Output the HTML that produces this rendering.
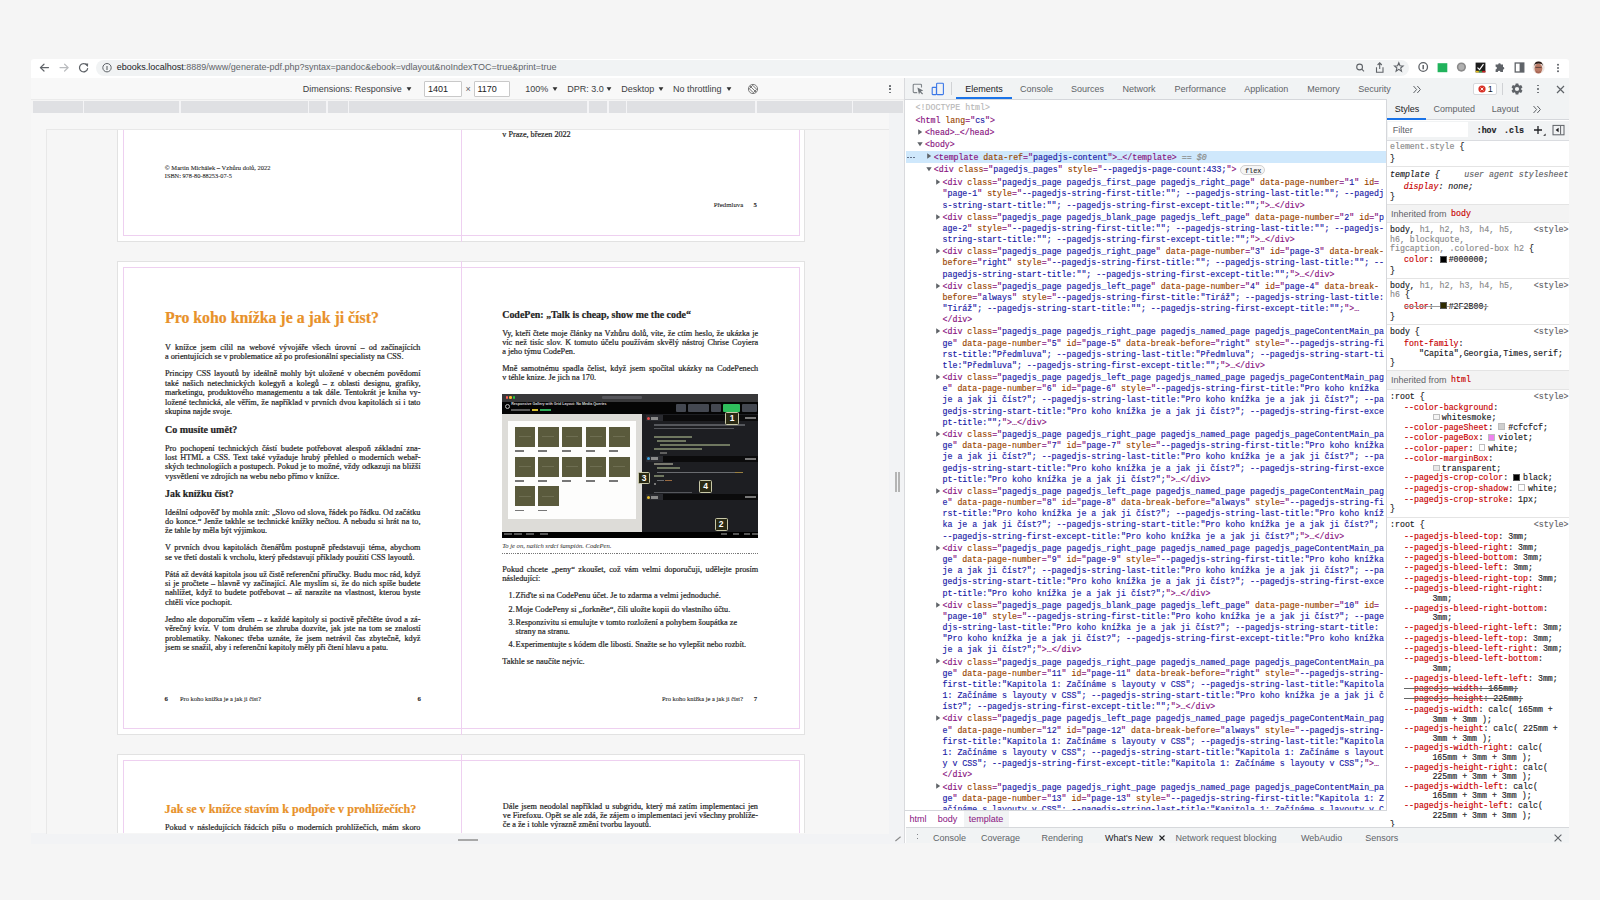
<!DOCTYPE html><html><head><meta charset="utf-8"><style>
*{box-sizing:border-box;margin:0;padding:0}
html,body{width:1600px;height:900px;overflow:hidden;background:#f5f5f5;position:relative}
body{font-family:"Liberation Sans",sans-serif;color:#202124}
.a{position:absolute}
.nw{white-space:pre}
.mk{-webkit-text-stroke:0.15px}.sk{-webkit-text-stroke:0.2px}
.t{color:#881280}.n{color:#994500}.v{color:#1a1aa6}
</style></head><body><div class="a" style="left:31.00px;top:58.80px;width:1538.00px;height:19.40px;background:#fff;border-radius:3px 3px 0 0"></div>
<div class="a" style="left:96.00px;top:60.00px;width:1313.00px;height:15.50px;background:#f1f3f4;border-radius:8px"></div>
<div class="a nw" style="left:116.80px;top:60.48px;font-family:'Liberation Sans',sans-serif;font-size:9px;line-height:14px;color:#5f6368;"><span style="color:#202124">ebooks.localhost</span>:8889/www/generate-pdf.php?syntax=pandoc&amp;ebook=vdlayout&amp;noIndexTOC=true&amp;print=true</div>
<svg class="a" style="left:36px;top:60px" width="60" height="16" viewBox="0 0 60 16">
<g fill="none" stroke="#5f6368" stroke-width="1.2" stroke-linecap="round" stroke-linejoin="round">
<path d="M12.5 7.6H4.5M8 4.2L4.4 7.6L8 11"/>
</g>
<g fill="none" stroke="#b9bbbe" stroke-width="1.2" stroke-linecap="round" stroke-linejoin="round">
<path d="M24 7.6H32M28.6 4.2L32.2 7.6L28.6 11"/>
</g>
<g fill="none" stroke="#5f6368" stroke-width="1.25" stroke-linecap="round">
<path d="M50.8 5.2A4.1 4.1 0 1 0 51.6 8.6"/>
</g>
<path d="M48.6 3.6L52.2 3.4L51.9 7Z" fill="#5f6368"/>
</svg>
<svg class="a" style="left:101px;top:62px" width="12" height="12" viewBox="0 0 12 12">
<circle cx="6" cy="5.7" r="4.2" fill="none" stroke="#5f6368" stroke-width="1"/>
<path d="M6 4V8" stroke="#5f6368" stroke-width="1.1"/>
</svg>
<svg class="a" style="left:1350px;top:59px" width="220" height="18" viewBox="0 0 220 18">
<g fill="none" stroke="#5f6368" stroke-width="1.1">
<circle cx="9.6" cy="8" r="2.9"/><path d="M11.8 10.2L14 12.4"/>
<path d="M26.5 8.2V13.2H33V8.2M29.7 4V10M27.6 6L29.7 3.9L31.8 6"/>
<path d="M48.8 3.8L50 6.8L53.1 7L50.7 9L51.5 12.2L48.8 10.4L46.1 12.2L46.9 9L44.5 7L47.6 6.8Z"/>
<circle cx="73.2" cy="8" r="4.3" stroke-width="1.3"/><path d="M73.2 6V10.2" stroke-width="1.5"/>
</g>
<rect x="87.6" y="4.2" width="9.7" height="9" fill="#21b35c"/>
<circle cx="111.4" cy="8.1" r="4.6" fill="#8a8a8a"/><circle cx="111.4" cy="8.1" r="3" fill="#b0b0b0"/>
<rect x="125.6" y="3.6" width="9.8" height="9.8" fill="#1c1c1c"/><path d="M127.5 8.6L129.6 10.6L133.5 5.2" stroke="#fff" stroke-width="1.2" fill="none"/>
<rect x="125.6" y="11.8" width="3.3" height="1.6" fill="#e8c020"/><rect x="128.9" y="11.8" width="3.3" height="1.6" fill="#3a9a40"/><rect x="132.2" y="11.8" width="3.2" height="1.6" fill="#d02020"/>
<path d="M145.6 5.5H148.2A1.3 1.3 0 0 1 150.8 5.5H153V8A1.3 1.3 0 0 1 153 10.6V13H150.4A1.3 1.3 0 0 0 147.8 13H145.6V10.4A1.3 1.3 0 0 0 145.6 7.8Z" fill="#5f6368"/>
<rect x="165.2" y="4" width="8.6" height="9" fill="none" stroke="#5f6368" stroke-width="1.3"/><rect x="169.6" y="4" width="4.2" height="9" fill="#5f6368"/>
<circle cx="188.6" cy="8.6" r="6.1" fill="#efe6e2"/><ellipse cx="188.4" cy="9.6" rx="3.9" ry="5" fill="#b97a66"/><path d="M184.2 7Q184.6 2.4 188.6 2.6Q192.6 2.6 192.8 7L191.6 5Q188.6 3.8 185.6 5Z" fill="#2a1a14"/><path d="M185.4 8.4H191.6" stroke="#3a2a24" stroke-width="0.7"/><path d="M186 12.6Q188.4 14.2 190.8 12.6" stroke="#8a4a3a" stroke-width="0.6" fill="none"/>
<circle cx="208" cy="5.8" r="1" fill="#5f6368"/><circle cx="208" cy="9" r="1" fill="#5f6368"/><circle cx="208" cy="12.2" r="1" fill="#5f6368"/>
</svg>
<div class="a" style="left:31.00px;top:78.00px;width:874.00px;height:21.50px;background:#f8f8f8;border-bottom:1px solid #ebebeb"></div>
<div class="a nw" style="left:302.70px;top:82.18px;font-family:'Liberation Sans',sans-serif;font-size:9px;line-height:14px;color:#3c4043;">Dimensions: Responsive</div>
<svg class="a" style="left:405.8px;top:85.8px" width="6" height="6" viewBox="0 0 6 6"><path d="M0.6 1.2H5.4L3 5Z" fill="#303030"/></svg>
<div class="a" style="left:424.20px;top:81.30px;width:37.50px;height:15.40px;background:#fff;border:1px solid #c9c9c9;border-radius:1px"></div>
<div class="a nw" style="left:428.00px;top:82.18px;font-family:'Liberation Sans',sans-serif;font-size:9px;line-height:14px;color:#202124;">1401</div>
<div class="a nw" style="left:465.60px;top:82.18px;font-family:'Liberation Sans',sans-serif;font-size:9px;line-height:14px;color:#5f6368;">×</div>
<div class="a" style="left:473.70px;top:81.30px;width:36.70px;height:15.40px;background:#fff;border:1px solid #c9c9c9;border-radius:1px"></div>
<div class="a nw" style="left:477.40px;top:82.18px;font-family:'Liberation Sans',sans-serif;font-size:9px;line-height:14px;color:#202124;">1170</div>
<div class="a nw" style="left:525.20px;top:82.18px;font-family:'Liberation Sans',sans-serif;font-size:9px;line-height:14px;color:#3c4043;">100%</div>
<svg class="a" style="left:552.3px;top:85.8px" width="6" height="6" viewBox="0 0 6 6"><path d="M0.6 1.2H5.4L3 5Z" fill="#303030"/></svg>
<div class="a nw" style="left:567.20px;top:82.18px;font-family:'Liberation Sans',sans-serif;font-size:9px;line-height:14px;color:#3c4043;">DPR: 3.0</div>
<svg class="a" style="left:606.4px;top:85.8px" width="6" height="6" viewBox="0 0 6 6"><path d="M0.6 1.2H5.4L3 5Z" fill="#303030"/></svg>
<div class="a nw" style="left:621.20px;top:82.18px;font-family:'Liberation Sans',sans-serif;font-size:9px;line-height:14px;color:#3c4043;">Desktop</div>
<svg class="a" style="left:658.3px;top:85.8px" width="6" height="6" viewBox="0 0 6 6"><path d="M0.6 1.2H5.4L3 5Z" fill="#303030"/></svg>
<div class="a nw" style="left:673.00px;top:82.18px;font-family:'Liberation Sans',sans-serif;font-size:9px;line-height:14px;color:#3c4043;">No throttling</div>
<svg class="a" style="left:725.8px;top:85.8px" width="6" height="6" viewBox="0 0 6 6"><path d="M0.6 1.2H5.4L3 5Z" fill="#303030"/></svg>
<svg class="a" style="left:747px;top:83px" width="12" height="12" viewBox="0 0 12 12"><g fill="none" stroke="#6e6e6e" stroke-width="0.9"><circle cx="6" cy="6" r="4.6"/><path d="M2.8 2.8L9.2 9.2"/><rect x="3.6" y="3.2" width="4.8" height="5.6" transform="rotate(-45 6 6)"/></g></svg>
<div class="a" style="left:889.30px;top:84.95px;width:1.70px;height:1.70px;background:#5f6368;border-radius:50%"></div>
<div class="a" style="left:889.30px;top:88.25px;width:1.70px;height:1.70px;background:#5f6368;border-radius:50%"></div>
<div class="a" style="left:889.30px;top:91.55px;width:1.70px;height:1.70px;background:#5f6368;border-radius:50%"></div>
<div class="a" style="left:33.00px;top:100.70px;width:870.00px;height:12.20px;background:#dfe0e3;"></div>
<div class="a" style="left:82.95px;top:100.70px;width:1.30px;height:12.20px;background:#f4f4f6;"></div>
<div class="a" style="left:179.25px;top:100.70px;width:1.30px;height:12.20px;background:#f4f4f6;"></div>
<div class="a" style="left:307.95px;top:100.70px;width:1.30px;height:12.20px;background:#f4f4f6;"></div>
<div class="a" style="left:326.35px;top:100.70px;width:1.30px;height:12.20px;background:#f4f4f6;"></div>
<div class="a" style="left:347.55px;top:100.70px;width:1.30px;height:12.20px;background:#f4f4f6;"></div>
<div class="a" style="left:587.35px;top:100.70px;width:1.30px;height:12.20px;background:#f4f4f6;"></div>
<div class="a" style="left:607.35px;top:100.70px;width:1.30px;height:12.20px;background:#f4f4f6;"></div>
<div class="a" style="left:626.05px;top:100.70px;width:1.30px;height:12.20px;background:#f4f4f6;"></div>
<div class="a" style="left:755.35px;top:100.70px;width:1.30px;height:12.20px;background:#f4f4f6;"></div>
<div class="a" style="left:851.55px;top:100.70px;width:1.30px;height:12.20px;background:#f4f4f6;"></div>
<div class="a" style="left:31.00px;top:113.00px;width:874.00px;height:730.50px;background:#f7f7f7;border-radius:0 0 0 6px"></div>
<div class="a" style="left:888.50px;top:113.00px;width:16.00px;height:730.50px;background:#f2f3f5;"></div>
<div class="a" style="left:31.00px;top:833.00px;width:874.00px;height:10.50px;background:#f2f3f5;"></div>
<div class="a" style="left:895.00px;top:472.00px;width:2.00px;height:19.60px;background:#b4b4b4;"></div>
<div class="a" style="left:897.90px;top:472.00px;width:2.00px;height:19.60px;background:#b4b4b4;"></div>
<div class="a" style="left:458.20px;top:839.20px;width:19.80px;height:1.60px;background:#a8a8a8;"></div>
<svg class="a" style="left:894px;top:835px" width="8" height="8" viewBox="0 0 8 8"><path d="M1.4 6L6.6 1.8" stroke="#8a8a8a" stroke-width="1.1"/></svg>
<div class="a" style="left:45.6px;top:128.8px;width:843px;height:705px;border-left:1px solid #e8e8e8;border-top:1px solid #e8e8e8;background:#f6f6f6"></div>
<div class="a" style="left:47px;top:130px;width:842px;height:703px;overflow:hidden"><div class="a" style="left:-47px;top:-130px;width:1600px;height:900px">
<div class="a" style="left:117.10px;top:-100.00px;width:688.40px;height:341.80px;background:#fff;border:1px solid #e2e2e2"></div>
<div class="a" style="left:122.90px;top:-94.20px;width:677.20px;height:330.20px;background:transparent;border:1px solid #eed0f0"></div>
<div class="a" style="left:460.80px;top:-100.00px;width:1.00px;height:341.80px;background:#eed0f0;"></div>
<div class="a" style="left:117.10px;top:261.00px;width:688.40px;height:474.00px;background:#fff;border:1px solid #e2e2e2"></div>
<div class="a" style="left:122.90px;top:266.80px;width:677.20px;height:462.40px;background:transparent;border:1px solid #eed0f0"></div>
<div class="a" style="left:460.80px;top:261.00px;width:1.00px;height:474.00px;background:#eed0f0;"></div>
<div class="a" style="left:117.10px;top:754.00px;width:688.40px;height:474.00px;background:#fff;border:1px solid #e2e2e2"></div>
<div class="a" style="left:122.90px;top:759.80px;width:677.20px;height:462.40px;background:transparent;border:1px solid #eed0f0"></div>
<div class="a" style="left:460.80px;top:754.00px;width:1.00px;height:474.00px;background:#eed0f0;"></div>
<div class="a sk" style="left:164.80px;top:163.41px;width:200.00px;white-space:nowrap;font-family:'Liberation Serif',serif;font-size:6.5px;line-height:10px;color:#1e1e1e;-webkit-text-stroke:0.08px;">© Martin Michálek – Vzhůru dolů, 2022</div>
<div class="a sk" style="left:164.80px;top:170.87px;width:200.00px;white-space:nowrap;font-family:'Liberation Serif',serif;font-size:6.3px;line-height:10px;color:#1e1e1e;-webkit-text-stroke:0.08px;">ISBN: 978-80-88253-07-5</div>
<div class="a sk" style="left:502.30px;top:129.94px;width:200.00px;white-space:nowrap;font-family:'Liberation Serif',serif;font-size:8.17px;line-height:10px;color:#1e1e1e;">v Praze, březen 2022</div>
<div class="a sk" style="left:713.70px;top:200.40px;width:60.00px;white-space:nowrap;font-family:'Liberation Serif',serif;font-size:6.83px;line-height:10px;color:#1e1e1e;-webkit-text-stroke:0.08px;">Předmluva</div>
<div class="a sk" style="left:753.60px;top:200.41px;width:10.00px;white-space:nowrap;font-family:'Liberation Serif',serif;font-size:6.8px;line-height:10px;color:#1e1e1e;-webkit-text-stroke:0.08px;font-weight:bold">5</div>
<div class="a sk" style="left:165.00px;top:308.96px;width:260.00px;white-space:nowrap;font-family:'Liberation Serif',serif;font-size:15.84px;line-height:18px;color:#e8912a;font-weight:bold">Pro koho knížka je a jak ji číst?</div>
<div class="a sk" style="left:165.00px;top:342.82px;width:255.50px;white-space:nowrap;font-family:'Liberation Serif',serif;font-size:8.25px;line-height:10px;color:#1e1e1e;text-align:justify;text-align-last:justify;">V knížce jsem cílil na webové vývojáře všech úrovní – od začínajících</div>
<div class="a sk" style="left:165.00px;top:352.17px;width:255.50px;white-space:nowrap;font-family:'Liberation Serif',serif;font-size:8.25px;line-height:10px;color:#1e1e1e;">a orientujících se v problematice až po profesionální specialisty na CSS.</div>
<div class="a sk" style="left:165.00px;top:369.47px;width:255.50px;white-space:nowrap;font-family:'Liberation Serif',serif;font-size:8.25px;line-height:10px;color:#1e1e1e;text-align:justify;text-align-last:justify;">Principy CSS layoutů by ideálně mohly být uložené v obecném povědomí</div>
<div class="a sk" style="left:165.00px;top:378.82px;width:255.50px;white-space:nowrap;font-family:'Liberation Serif',serif;font-size:8.25px;line-height:10px;color:#1e1e1e;text-align:justify;text-align-last:justify;">také našich netechnických kolegyň a kolegů – z oblasti designu, grafiky,</div>
<div class="a sk" style="left:165.00px;top:388.17px;width:255.50px;white-space:nowrap;font-family:'Liberation Serif',serif;font-size:8.25px;line-height:10px;color:#1e1e1e;text-align:justify;text-align-last:justify;">marketingu, produktového managementu a tak dále. Tentokrát je kniha vy-</div>
<div class="a sk" style="left:165.00px;top:397.52px;width:255.50px;white-space:nowrap;font-family:'Liberation Serif',serif;font-size:8.25px;line-height:10px;color:#1e1e1e;text-align:justify;text-align-last:justify;">ložené technická, ale věřím, že například v prvních dvou kapitolách si i tato</div>
<div class="a sk" style="left:165.00px;top:406.87px;width:255.50px;white-space:nowrap;font-family:'Liberation Serif',serif;font-size:8.25px;line-height:10px;color:#1e1e1e;">skupina najde svoje.</div>
<div class="a sk" style="left:165.00px;top:423.63px;width:200.00px;white-space:nowrap;font-family:'Liberation Serif',serif;font-size:10.0px;line-height:12px;color:#1e1e1e;font-weight:bold">Co musíte umět?</div>
<div class="a sk" style="left:165.00px;top:443.52px;width:255.50px;white-space:nowrap;font-family:'Liberation Serif',serif;font-size:8.25px;line-height:10px;color:#1e1e1e;text-align:justify;text-align-last:justify;">Pro pochopení technických částí budete potřebovat alespoň základní zna-</div>
<div class="a sk" style="left:165.00px;top:452.87px;width:255.50px;white-space:nowrap;font-family:'Liberation Serif',serif;font-size:8.25px;line-height:10px;color:#1e1e1e;text-align:justify;text-align-last:justify;">lost HTML a CSS. Text také vyžaduje hrubý přehled o moderních webař-</div>
<div class="a sk" style="left:165.00px;top:462.22px;width:255.50px;white-space:nowrap;font-family:'Liberation Serif',serif;font-size:8.25px;line-height:10px;color:#1e1e1e;text-align:justify;text-align-last:justify;">ských technologiích a postupech. Pokud je to možné, vždy odkazuji na bližší</div>
<div class="a sk" style="left:165.00px;top:471.57px;width:255.50px;white-space:nowrap;font-family:'Liberation Serif',serif;font-size:8.25px;line-height:10px;color:#1e1e1e;">vysvětlení ve zdrojích na webu nebo přímo v knížce.</div>
<div class="a sk" style="left:165.00px;top:487.66px;width:200.00px;white-space:nowrap;font-family:'Liberation Serif',serif;font-size:9.9px;line-height:12px;color:#1e1e1e;font-weight:bold">Jak knížku číst?</div>
<div class="a sk" style="left:165.00px;top:507.52px;width:255.50px;white-space:nowrap;font-family:'Liberation Serif',serif;font-size:8.25px;line-height:10px;color:#1e1e1e;text-align:justify;text-align-last:justify;">Ideální odpověď by mohla znít: „Slovo od slova, řádek po řádku. Od začátku</div>
<div class="a sk" style="left:165.00px;top:516.87px;width:255.50px;white-space:nowrap;font-family:'Liberation Serif',serif;font-size:8.25px;line-height:10px;color:#1e1e1e;text-align:justify;text-align-last:justify;">do konce.“ Jenže takhle se technické knížky nečtou. A nebudu si hrát na to,</div>
<div class="a sk" style="left:165.00px;top:526.22px;width:255.50px;white-space:nowrap;font-family:'Liberation Serif',serif;font-size:8.25px;line-height:10px;color:#1e1e1e;">že tahle by měla být výjimkou.</div>
<div class="a sk" style="left:165.00px;top:543.42px;width:255.50px;white-space:nowrap;font-family:'Liberation Serif',serif;font-size:8.25px;line-height:10px;color:#1e1e1e;text-align:justify;text-align-last:justify;">V prvních dvou kapitolách čtenářům postupně představuji téma, abychom</div>
<div class="a sk" style="left:165.00px;top:552.77px;width:255.50px;white-space:nowrap;font-family:'Liberation Serif',serif;font-size:8.25px;line-height:10px;color:#1e1e1e;">se ve třetí dostali k vrcholu, který představují příklady použití CSS layoutů.</div>
<div class="a sk" style="left:165.00px;top:569.72px;width:255.50px;white-space:nowrap;font-family:'Liberation Serif',serif;font-size:8.25px;line-height:10px;color:#1e1e1e;text-align:justify;text-align-last:justify;">Pátá až devátá kapitola jsou už čistě referenční příručky. Budu moc rád, když</div>
<div class="a sk" style="left:165.00px;top:579.07px;width:255.50px;white-space:nowrap;font-family:'Liberation Serif',serif;font-size:8.25px;line-height:10px;color:#1e1e1e;text-align:justify;text-align-last:justify;">si je pročtete – hlavně vy začínající. Ale myslím si, že do nich spíše budete</div>
<div class="a sk" style="left:165.00px;top:588.42px;width:255.50px;white-space:nowrap;font-family:'Liberation Serif',serif;font-size:8.25px;line-height:10px;color:#1e1e1e;text-align:justify;text-align-last:justify;">nahlížet, když to budete potřebovat – až narazíte na vlastnost, kterou byste</div>
<div class="a sk" style="left:165.00px;top:597.77px;width:255.50px;white-space:nowrap;font-family:'Liberation Serif',serif;font-size:8.25px;line-height:10px;color:#1e1e1e;">chtěli více pochopit.</div>
<div class="a sk" style="left:165.00px;top:615.12px;width:255.50px;white-space:nowrap;font-family:'Liberation Serif',serif;font-size:8.25px;line-height:10px;color:#1e1e1e;text-align:justify;text-align-last:justify;">Jedno ale doporučím všem – z každé kapitoly si poctivě přečtěte úvod a zá-</div>
<div class="a sk" style="left:165.00px;top:624.47px;width:255.50px;white-space:nowrap;font-family:'Liberation Serif',serif;font-size:8.25px;line-height:10px;color:#1e1e1e;text-align:justify;text-align-last:justify;">věrečný kvíz. V tom druhém se zhruba dozvíte, jak jste na tom se znalostí</div>
<div class="a sk" style="left:165.00px;top:633.82px;width:255.50px;white-space:nowrap;font-family:'Liberation Serif',serif;font-size:8.25px;line-height:10px;color:#1e1e1e;text-align:justify;text-align-last:justify;">problematiky. Nakonec třeba uznáte, že jsem netrávil čas zbytečně, když</div>
<div class="a sk" style="left:165.00px;top:643.17px;width:255.50px;white-space:nowrap;font-family:'Liberation Serif',serif;font-size:8.25px;line-height:10px;color:#1e1e1e;">jsem se snažil, aby i referenční kapitoly měly při čtení hlavu a patu.</div>
<div class="a sk" style="left:164.60px;top:693.71px;width:10.00px;white-space:nowrap;font-family:'Liberation Serif',serif;font-size:6.8px;line-height:10px;color:#1e1e1e;-webkit-text-stroke:0.08px;font-weight:bold">6</div>
<div class="a sk" style="left:180.00px;top:693.83px;width:120.00px;white-space:nowrap;font-family:'Liberation Serif',serif;font-size:6.44px;line-height:10px;color:#1e1e1e;-webkit-text-stroke:0.08px;">Pro koho knížka je a jak ji číst?</div>
<div class="a sk" style="left:417.40px;top:693.71px;width:10.00px;white-space:nowrap;font-family:'Liberation Serif',serif;font-size:6.8px;line-height:10px;color:#1e1e1e;-webkit-text-stroke:0.08px;font-weight:bold">6</div>
<div class="a sk" style="left:502.20px;top:308.64px;width:260.00px;white-space:nowrap;font-family:'Liberation Serif',serif;font-size:9.96px;line-height:12px;color:#1e1e1e;font-weight:bold">CodePen: „Talk is cheap, show me the code“</div>
<div class="a sk" style="left:502.20px;top:328.52px;width:256.00px;white-space:nowrap;font-family:'Liberation Serif',serif;font-size:8.25px;line-height:10px;color:#1e1e1e;text-align:justify;text-align-last:justify;">Vy, kteří čtete moje články na Vzhůru dolů, víte, že ctím heslo, že ukázka je</div>
<div class="a sk" style="left:502.20px;top:337.87px;width:256.00px;white-space:nowrap;font-family:'Liberation Serif',serif;font-size:8.25px;line-height:10px;color:#1e1e1e;text-align:justify;text-align-last:justify;">víc než tisíc slov. K tomuto účelu používám skvělý nástroj Chrise Coyiera</div>
<div class="a sk" style="left:502.20px;top:347.22px;width:256.00px;white-space:nowrap;font-family:'Liberation Serif',serif;font-size:8.25px;line-height:10px;color:#1e1e1e;">a jeho týmu CodePen.</div>
<div class="a sk" style="left:502.20px;top:363.62px;width:256.00px;white-space:nowrap;font-family:'Liberation Serif',serif;font-size:8.25px;line-height:10px;color:#1e1e1e;text-align:justify;text-align-last:justify;">Mně samotnému spadla čelist, když jsem spočítal ukázky na CodePenech</div>
<div class="a sk" style="left:502.20px;top:372.97px;width:256.00px;white-space:nowrap;font-family:'Liberation Serif',serif;font-size:8.25px;line-height:10px;color:#1e1e1e;">v téhle knize. Je jich na 170.</div>
<div class="a" style="left:502.20px;top:393.70px;width:256.10px;height:143.80px;background:#1d1e22;"></div>
<div class="a" style="left:502.20px;top:393.70px;width:256.10px;height:8.00px;background:#38383a;"></div>
<div class="a" style="left:505.70px;top:396.30px;width:2.60px;height:2.60px;background:#ff5f57;border-radius:50%"></div>
<div class="a" style="left:509.30px;top:396.30px;width:2.60px;height:2.60px;background:#febc2e;border-radius:50%"></div>
<div class="a" style="left:512.90px;top:396.30px;width:2.60px;height:2.60px;background:#28c840;border-radius:50%"></div>
<div class="a" style="left:602.20px;top:396.30px;width:40.00px;height:2.80px;background:#55555a;border-radius:1px"></div>
<div class="a" style="left:502.20px;top:401.70px;width:256.10px;height:12.50px;background:#050505;"></div>
<div class="a" style="left:504.80px;top:403.90px;width:5.40px;height:5.40px;background:transparent;border-radius:50%;border:1.2px solid #bbb"></div>
<div class="a nw" style="left:511.2px;top:402.3px;font-family:'Liberation Sans',sans-serif;font-weight:bold;font-size:3.65px;line-height:5px;color:#d6d6d6;letter-spacing:-0.02px">Responsive Gallery with Grid Layout: No Media Queries</div>
<div class="a" style="left:511.20px;top:409.30px;width:19.00px;height:1.50px;background:#5a5a5a;"></div>
<div class="a" style="left:532.20px;top:408.90px;width:6.00px;height:2.40px;background:#d8c030;"></div>
<div class="a" style="left:539.70px;top:408.90px;width:11.00px;height:2.40px;background:#2fae5a;"></div>
<div class="a" style="left:675.50px;top:404.20px;width:10.00px;height:8.30px;background:#444851;border-radius:1px"></div>
<div class="a" style="left:687.70px;top:404.20px;width:21.10px;height:8.30px;background:#444851;border-radius:1px"></div>
<div class="a" style="left:711.30px;top:404.20px;width:10.00px;height:8.30px;background:#444851;border-radius:1px"></div>
<div class="a" style="left:723.30px;top:404.20px;width:16.70px;height:8.30px;background:#2fbe5c;border-radius:1px"></div>
<div class="a" style="left:742.20px;top:404.20px;width:14.50px;height:8.30px;background:#444851;border-radius:1px"></div>
<div class="a" style="left:502.20px;top:414.20px;width:140.00px;height:117.80px;background:#dddcd8;"></div>
<div class="a" style="left:508.30px;top:420.80px;width:127.70px;height:98.40px;background:#fdfdfc;"></div>
<div class="a" style="left:514.70px;top:427.00px;width:20.40px;height:20.20px;background:#5a5a3c;"></div>
<div class="a" style="left:518.70px;top:436.40px;width:12.00px;height:1.10px;background:#6e6e52;"></div>
<div class="a" style="left:514.70px;top:450.30px;width:9.00px;height:1.50px;background:#777;"></div>
<div class="a" style="left:538.35px;top:427.00px;width:20.40px;height:20.20px;background:#5a5a3c;"></div>
<div class="a" style="left:542.35px;top:436.40px;width:12.00px;height:1.10px;background:#6e6e52;"></div>
<div class="a" style="left:538.35px;top:450.30px;width:9.00px;height:1.50px;background:#777;"></div>
<div class="a" style="left:562.00px;top:427.00px;width:20.40px;height:20.20px;background:#5a5a3c;"></div>
<div class="a" style="left:566.00px;top:436.40px;width:12.00px;height:1.10px;background:#6e6e52;"></div>
<div class="a" style="left:562.00px;top:450.30px;width:9.00px;height:1.50px;background:#777;"></div>
<div class="a" style="left:585.65px;top:427.00px;width:20.40px;height:20.20px;background:#5a5a3c;"></div>
<div class="a" style="left:589.65px;top:436.40px;width:12.00px;height:1.10px;background:#6e6e52;"></div>
<div class="a" style="left:585.65px;top:450.30px;width:9.00px;height:1.50px;background:#777;"></div>
<div class="a" style="left:609.30px;top:427.00px;width:20.40px;height:20.20px;background:#5a5a3c;"></div>
<div class="a" style="left:613.30px;top:436.40px;width:12.00px;height:1.10px;background:#6e6e52;"></div>
<div class="a" style="left:609.30px;top:450.30px;width:9.00px;height:1.50px;background:#777;"></div>
<div class="a" style="left:514.70px;top:456.70px;width:20.40px;height:20.20px;background:#5a5a3c;"></div>
<div class="a" style="left:518.70px;top:466.10px;width:12.00px;height:1.10px;background:#6e6e52;"></div>
<div class="a" style="left:514.70px;top:480.00px;width:9.00px;height:1.50px;background:#777;"></div>
<div class="a" style="left:538.35px;top:456.70px;width:20.40px;height:20.20px;background:#5a5a3c;"></div>
<div class="a" style="left:542.35px;top:466.10px;width:12.00px;height:1.10px;background:#6e6e52;"></div>
<div class="a" style="left:538.35px;top:480.00px;width:9.00px;height:1.50px;background:#777;"></div>
<div class="a" style="left:562.00px;top:456.70px;width:20.40px;height:20.20px;background:#5a5a3c;"></div>
<div class="a" style="left:566.00px;top:466.10px;width:12.00px;height:1.10px;background:#6e6e52;"></div>
<div class="a" style="left:562.00px;top:480.00px;width:9.00px;height:1.50px;background:#777;"></div>
<div class="a" style="left:585.65px;top:456.70px;width:20.40px;height:20.20px;background:#5a5a3c;"></div>
<div class="a" style="left:589.65px;top:466.10px;width:12.00px;height:1.10px;background:#6e6e52;"></div>
<div class="a" style="left:585.65px;top:480.00px;width:9.00px;height:1.50px;background:#777;"></div>
<div class="a" style="left:609.30px;top:456.70px;width:20.40px;height:20.20px;background:#5a5a3c;"></div>
<div class="a" style="left:613.30px;top:466.10px;width:12.00px;height:1.10px;background:#6e6e52;"></div>
<div class="a" style="left:609.30px;top:480.00px;width:9.00px;height:1.50px;background:#777;"></div>
<div class="a" style="left:514.70px;top:486.30px;width:20.40px;height:20.20px;background:#5a5a3c;"></div>
<div class="a" style="left:518.70px;top:495.70px;width:12.00px;height:1.10px;background:#6e6e52;"></div>
<div class="a" style="left:514.70px;top:509.60px;width:9.00px;height:1.50px;background:#777;"></div>
<div class="a" style="left:538.35px;top:486.30px;width:20.40px;height:20.20px;background:#5a5a3c;"></div>
<div class="a" style="left:542.35px;top:495.70px;width:12.00px;height:1.10px;background:#6e6e52;"></div>
<div class="a" style="left:538.35px;top:509.60px;width:9.00px;height:1.50px;background:#777;"></div>
<div class="a" style="left:646.00px;top:415.00px;width:17.00px;height:6.40px;background:#2a2b30;"></div>
<div class="a" style="left:663.00px;top:415.00px;width:95.30px;height:6.40px;background:#0b0b0c;"></div>
<div class="a" style="left:745.00px;top:417.00px;width:11.00px;height:2.00px;background:#777;"></div>
<div class="a" style="left:646.00px;top:455.60px;width:17.00px;height:6.40px;background:#2a2b30;"></div>
<div class="a" style="left:663.00px;top:455.60px;width:95.30px;height:6.40px;background:#0b0b0c;"></div>
<div class="a" style="left:745.00px;top:457.60px;width:11.00px;height:2.00px;background:#777;"></div>
<div class="a" style="left:646.00px;top:493.60px;width:17.00px;height:6.40px;background:#2a2b30;"></div>
<div class="a" style="left:663.00px;top:493.60px;width:95.30px;height:6.40px;background:#0b0b0c;"></div>
<div class="a" style="left:745.00px;top:495.60px;width:11.00px;height:2.00px;background:#777;"></div>
<div class="a" style="left:646.50px;top:416.60px;width:3.60px;height:3.60px;background:#e34c4c;border-radius:50%"></div>
<div class="a" style="left:651.00px;top:417.20px;width:7.00px;height:2.40px;background:#8a8a8a;"></div>
<div class="a" style="left:646.50px;top:456.60px;width:3.60px;height:3.60px;background:#3aa0e0;border-radius:50%"></div>
<div class="a" style="left:651.00px;top:457.20px;width:7.00px;height:2.40px;background:#8a8a8a;"></div>
<div class="a" style="left:646.50px;top:495.80px;width:3.60px;height:3.60px;background:#e8c030;border-radius:50%"></div>
<div class="a" style="left:651.00px;top:496.40px;width:7.00px;height:2.40px;background:#8a8a8a;"></div>
<div class="a" style="left:654.00px;top:424.30px;width:91.00px;height:1.40px;background:#55575c;"></div>
<div class="a" style="left:654.00px;top:428.10px;width:80.00px;height:1.40px;background:#55575c;"></div>
<div class="a" style="left:654.00px;top:436.30px;width:38.00px;height:1.40px;background:#6f7760;"></div>
<div class="a" style="left:657.00px;top:440.30px;width:29.00px;height:1.40px;background:#6f7760;"></div>
<div class="a" style="left:660.00px;top:444.30px;width:70.00px;height:1.40px;background:#6f7760;"></div>
<div class="a" style="left:654.00px;top:448.30px;width:48.00px;height:1.40px;background:#6f7760;"></div>
<div class="a" style="left:660.00px;top:452.30px;width:7.00px;height:1.40px;background:#606060;"></div>
<div class="a" style="left:654.00px;top:463.30px;width:19.00px;height:1.40px;background:#7a7a70;"></div>
<div class="a" style="left:657.00px;top:467.30px;width:23.00px;height:1.40px;background:#6f7760;"></div>
<div class="a" style="left:657.00px;top:471.80px;width:78.00px;height:1.40px;background:#6a6c70;"></div>
<div class="a" style="left:735.00px;top:471.80px;width:8.00px;height:1.40px;background:#9a8040;"></div>
<div class="a" style="left:654.00px;top:475.30px;width:10.00px;height:1.40px;background:#6f7760;"></div>
<div class="a" style="left:657.00px;top:479.80px;width:7.00px;height:1.40px;background:#6a6c70;"></div>
<div class="a" style="left:665.00px;top:479.80px;width:7.00px;height:1.40px;background:#9a6a40;"></div>
<div class="a" style="left:654.00px;top:483.30px;width:1.60px;height:1.40px;background:#777;"></div>
<div class="a" style="left:654.00px;top:491.80px;width:38.00px;height:1.40px;background:#55575c;"></div>
<div class="a" style="left:502.20px;top:532.00px;width:256.10px;height:5.50px;background:#000;"></div>
<div class="a" style="left:504.00px;top:533.40px;width:8.00px;height:1.60px;background:#555;"></div>
<div class="a" style="left:514.00px;top:533.40px;width:8.00px;height:1.60px;background:#555;"></div>
<div class="a" style="left:526.00px;top:533.40px;width:8.00px;height:1.60px;background:#555;"></div>
<div class="a" style="left:540.00px;top:533.40px;width:8.00px;height:1.60px;background:#555;"></div>
<div class="a" style="left:721.00px;top:533.40px;width:6.00px;height:1.60px;background:#555;"></div>
<div class="a" style="left:733.00px;top:533.40px;width:6.00px;height:1.60px;background:#555;"></div>
<div class="a" style="left:744.00px;top:533.40px;width:6.00px;height:1.60px;background:#555;"></div>
<div class="a" style="left:752.00px;top:533.40px;width:6.00px;height:1.60px;background:#555;"></div>
<div class="a" style="left:725.0px;top:412.0px;width:14.2px;height:12.7px;background:#2a2a14;border:1px solid #c8c8a8;border-radius:1.5px;color:#fff;font-family:'Liberation Sans',sans-serif;font-weight:bold;font-size:8.5px;line-height:10.7px;text-align:center">1</div>
<div class="a" style="left:637.7px;top:471.7px;width:12.8px;height:12.8px;background:#2a2a14;border:1px solid #c8c8a8;border-radius:1.5px;color:#fff;font-family:'Liberation Sans',sans-serif;font-weight:bold;font-size:8.5px;line-height:10.8px;text-align:center">3</div>
<div class="a" style="left:698.8px;top:480.3px;width:13.4px;height:13.0px;background:#2a2a14;border:1px solid #c8c8a8;border-radius:1.5px;color:#fff;font-family:'Liberation Sans',sans-serif;font-weight:bold;font-size:8.5px;line-height:11.0px;text-align:center">4</div>
<div class="a" style="left:714.7px;top:517.5px;width:13.0px;height:13.0px;background:#2a2a14;border:1px solid #c8c8a8;border-radius:1.5px;color:#fff;font-family:'Liberation Sans',sans-serif;font-weight:bold;font-size:8.5px;line-height:11.0px;text-align:center">2</div>
<div class="a sk" style="left:502.20px;top:540.77px;width:200.00px;white-space:nowrap;font-family:'Liberation Serif',serif;font-size:6.6px;line-height:10px;color:#1e1e1e;-webkit-text-stroke:0.08px;font-style:italic;-webkit-text-stroke:0">To je on, našich srdcí šampión. CodePen.</div>
<div class="a" style="left:502.20px;top:553.00px;width:256.00px;height:0.90px;background:repeating-linear-gradient(90deg,#777 0 1.2px,transparent 1.2px 2.2px);"></div>
<div class="a sk" style="left:502.20px;top:565.02px;width:256.00px;white-space:nowrap;font-family:'Liberation Serif',serif;font-size:8.25px;line-height:10px;color:#1e1e1e;text-align:justify;text-align-last:justify;">Pokud chcete „peny“ zkoušet, což vám velmi doporučuji, udělejte prosím</div>
<div class="a sk" style="left:502.20px;top:574.37px;width:256.00px;white-space:nowrap;font-family:'Liberation Serif',serif;font-size:8.25px;line-height:10px;color:#1e1e1e;">následující:</div>
<div class="a sk" style="left:508.60px;top:591.02px;width:10.00px;white-space:nowrap;font-family:'Liberation Serif',serif;font-size:8.25px;line-height:10px;color:#1e1e1e;">1.</div>
<div class="a sk" style="left:515.60px;top:591.02px;width:240.00px;white-space:nowrap;font-family:'Liberation Serif',serif;font-size:8.25px;line-height:10px;color:#1e1e1e;">Zřiďte si na CodePenu účet. Je to zdarma a velmi jednoduché.</div>
<div class="a sk" style="left:508.60px;top:604.62px;width:10.00px;white-space:nowrap;font-family:'Liberation Serif',serif;font-size:8.25px;line-height:10px;color:#1e1e1e;">2.</div>
<div class="a sk" style="left:515.60px;top:604.62px;width:240.00px;white-space:nowrap;font-family:'Liberation Serif',serif;font-size:8.25px;line-height:10px;color:#1e1e1e;">Moje CodePeny si „forkněte“, čili uložte kopii do vlastního účtu.</div>
<div class="a sk" style="left:508.60px;top:617.62px;width:10.00px;white-space:nowrap;font-family:'Liberation Serif',serif;font-size:8.25px;line-height:10px;color:#1e1e1e;">3.</div>
<div class="a sk" style="left:515.60px;top:617.62px;width:240.00px;white-space:nowrap;font-family:'Liberation Serif',serif;font-size:8.25px;line-height:10px;color:#1e1e1e;">Responzivitu si emulujte v tomto rozložení a pohybem šoupátka ze</div>
<div class="a sk" style="left:508.60px;top:640.02px;width:10.00px;white-space:nowrap;font-family:'Liberation Serif',serif;font-size:8.25px;line-height:10px;color:#1e1e1e;">4.</div>
<div class="a sk" style="left:515.60px;top:640.02px;width:240.00px;white-space:nowrap;font-family:'Liberation Serif',serif;font-size:8.25px;line-height:10px;color:#1e1e1e;">Experimentujte s kódem dle libosti. Snažte se ho vylepšit nebo rozbít.</div>
<div class="a sk" style="left:515.60px;top:627.02px;width:240.00px;white-space:nowrap;font-family:'Liberation Serif',serif;font-size:8.25px;line-height:10px;color:#1e1e1e;">strany na stranu.</div>
<div class="a sk" style="left:502.20px;top:657.18px;width:200.00px;white-space:nowrap;font-family:'Liberation Serif',serif;font-size:8.35px;line-height:10px;color:#1e1e1e;">Takhle se naučíte nejvíc.</div>
<div class="a sk" style="left:662.00px;top:693.83px;width:90.00px;white-space:nowrap;font-family:'Liberation Serif',serif;font-size:6.44px;line-height:10px;color:#1e1e1e;-webkit-text-stroke:0.08px;">Pro koho knížka je a jak ji číst?</div>
<div class="a sk" style="left:753.80px;top:693.71px;width:10.00px;white-space:nowrap;font-family:'Liberation Serif',serif;font-size:6.8px;line-height:10px;color:#1e1e1e;-webkit-text-stroke:0.08px;font-weight:bold">7</div>
<div class="a sk" style="left:164.60px;top:801.81px;width:300.00px;white-space:nowrap;font-family:'Liberation Serif',serif;font-size:12.13px;line-height:14px;color:#e8912a;font-weight:bold">Jak se v knížce stavím k podpoře v prohlížečích?</div>
<div class="a sk" style="left:165.00px;top:823.22px;width:255.50px;white-space:nowrap;font-family:'Liberation Serif',serif;font-size:8.25px;line-height:10px;color:#1e1e1e;text-align:justify;text-align-last:justify;">Pokud v následujících řádcích píšu o moderních prohlížečích, mám skoro</div>
<div class="a sk" style="left:502.80px;top:802.02px;width:255.20px;white-space:nowrap;font-family:'Liberation Serif',serif;font-size:8.25px;line-height:10px;color:#1e1e1e;text-align:justify;text-align-last:justify;">Dále jsem neodolal například u subgridu, který má zatím implementaci jen</div>
<div class="a sk" style="left:502.80px;top:811.22px;width:255.20px;white-space:nowrap;font-family:'Liberation Serif',serif;font-size:8.25px;line-height:10px;color:#1e1e1e;text-align:justify;text-align-last:justify;">ve Firefoxu. Opět se ale zdá, že zájem o implementaci jeví všechny prohlíže-</div>
<div class="a sk" style="left:502.80px;top:820.32px;width:255.20px;white-space:nowrap;font-family:'Liberation Serif',serif;font-size:8.25px;line-height:10px;color:#1e1e1e;">če a že i tohle výrazně změní tvorbu layoutů.</div>
</div></div>
<div class="a" style="left:903.90px;top:78.00px;width:665.10px;height:765.40px;background:#fff;border-left:1px solid #d9dadd"></div>
<div class="a" style="left:905.00px;top:78.00px;width:664.00px;height:21.60px;background:#f1f3f4;border-bottom:1px solid #d5d7db"></div>
<svg class="a" style="left:910px;top:81px" width="40" height="16" viewBox="0 0 40 16">
<path d="M7.2 11.6H4.2A1 1 0 0 1 3.2 10.6V4.2A1 1 0 0 1 4.2 3.2H10.5A1 1 0 0 1 11.5 4.2V6.6" fill="none" stroke="#80868b" stroke-width="1.1"/>
<path d="M7.4 6.6L13.2 9.4L10.8 10.4L13 12.6L12.2 13.4L10 11.2L9 13.6Z" fill="#6f757a"/>
<rect x="26.6" y="2.2" width="6.8" height="11.4" rx="0.8" fill="none" stroke="#3b78e7" stroke-width="1.1"/>
<rect x="22.2" y="6.4" width="4.2" height="7.2" rx="0.6" fill="none" stroke="#3b78e7" stroke-width="1.1"/>
</svg>
<div class="a" style="left:951.20px;top:82.00px;width:1.00px;height:13.00px;background:#d0d2d5;"></div>
<div class="a nw" style="left:965.20px;top:82.08px;font-family:'Liberation Sans',sans-serif;font-size:9px;line-height:14px;color:#202124;">Elements</div>
<div class="a nw" style="left:1020.00px;top:82.08px;font-family:'Liberation Sans',sans-serif;font-size:9px;line-height:14px;color:#5f6368;">Console</div>
<div class="a nw" style="left:1071.00px;top:82.08px;font-family:'Liberation Sans',sans-serif;font-size:9px;line-height:14px;color:#5f6368;">Sources</div>
<div class="a nw" style="left:1122.60px;top:82.08px;font-family:'Liberation Sans',sans-serif;font-size:9px;line-height:14px;color:#5f6368;">Network</div>
<div class="a nw" style="left:1174.50px;top:82.08px;font-family:'Liberation Sans',sans-serif;font-size:9px;line-height:14px;color:#5f6368;">Performance</div>
<div class="a nw" style="left:1244.20px;top:82.08px;font-family:'Liberation Sans',sans-serif;font-size:9px;line-height:14px;color:#5f6368;">Application</div>
<div class="a nw" style="left:1307.20px;top:82.08px;font-family:'Liberation Sans',sans-serif;font-size:9px;line-height:14px;color:#5f6368;">Memory</div>
<div class="a nw" style="left:1358.30px;top:82.08px;font-family:'Liberation Sans',sans-serif;font-size:9px;line-height:14px;color:#5f6368;">Security</div>
<div class="a" style="left:956.20px;top:97.30px;width:55.50px;height:2.00px;background:#1a73e8;"></div>
<svg class="a" style="left:1412px;top:84.5px" width="10" height="9" viewBox="0 0 10 9"><path d="M1.5 1L4.6 4.5L1.5 8M5.3 1L8.4 4.5L5.3 8" fill="none" stroke="#5f6368" stroke-width="1"/></svg>
<div class="a" style="left:1473.40px;top:82.70px;width:24.00px;height:12.80px;background:#fff;border:1px solid #d7d9dc;border-radius:2px"></div>
<svg class="a" style="left:1478px;top:85px" width="8" height="8" viewBox="0 0 8 8"><circle cx="4" cy="4" r="3.6" fill="#d93025"/><path d="M2.6 2.6L5.4 5.4M5.4 2.6L2.6 5.4" stroke="#fff" stroke-width="0.9"/></svg>
<div class="a nw" style="left:1487.80px;top:82.08px;font-family:'Liberation Sans',sans-serif;font-size:9px;line-height:14px;color:#202124;">1</div>
<div class="a" style="left:1502.40px;top:83.00px;width:1.00px;height:12.00px;background:#d0d2d5;"></div>
<svg class="a" style="left:1510px;top:82px" width="14" height="14" viewBox="0 0 24 24"><path fill="#5f6368" d="M19.14 12.94c.04-.3.06-.61.06-.94 0-.32-.02-.64-.07-.94l2.03-1.58a.49.49 0 0 0 .12-.61l-1.92-3.32a.49.49 0 0 0-.59-.22l-2.39.96c-.5-.38-1.03-.7-1.62-.94l-.36-2.54a.48.48 0 0 0-.48-.41h-3.84c-.24 0-.43.17-.47.41l-.36 2.54c-.59.24-1.13.57-1.62.94l-2.39-.96a.49.49 0 0 0-.59.22L2.74 8.87c-.12.21-.08.47.12.61l2.03 1.58c-.05.3-.09.63-.09.94s.02.64.07.94l-2.03 1.58a.49.49 0 0 0-.12.61l1.92 3.32c.12.22.37.29.59.22l2.39-.96c.5.38 1.03.7 1.62.94l.36 2.54c.05.24.24.41.48.41h3.84c.24 0 .44-.17.47-.41l.36-2.54c.59-.24 1.13-.56 1.62-.94l2.39.96c.22.08.47 0 .59-.22l1.92-3.32c.12-.22.07-.47-.12-.61l-2.01-1.58zM12 15.6A3.6 3.6 0 1 1 12 8.4a3.6 3.6 0 0 1 0 7.2z"/></svg>
<div class="a" style="left:1536.90px;top:84.50px;width:1.80px;height:1.80px;background:#5f6368;border-radius:50%"></div>
<div class="a" style="left:1536.90px;top:88.00px;width:1.80px;height:1.80px;background:#5f6368;border-radius:50%"></div>
<div class="a" style="left:1536.90px;top:91.50px;width:1.80px;height:1.80px;background:#5f6368;border-radius:50%"></div>
<svg class="a" style="left:1555px;top:83.5px" width="11" height="11" viewBox="0 0 11 11"><path d="M2 2L9 9M9 2L2 9" stroke="#5f6368" stroke-width="1.2"/></svg>
<div class="a" style="left:905.50px;top:151.20px;width:481.00px;height:11.80px;background:#cfe8fc;"></div>
<div class="a nw mk" style="left:915.60px;top:102.00px;font-family:'Liberation Mono',monospace;font-size:8.28px;line-height:12px;color:#202124;"><span style="color:#b8b8b8">&lt;!DOCTYPE html&gt;</span></div>
<div class="a nw mk" style="left:915.60px;top:114.50px;font-family:'Liberation Mono',monospace;font-size:8.28px;line-height:12px;color:#202124;"><span class="t">&lt;html</span><span class="n"> lang</span><span class="t">="</span><span class="v">cs</span><span class="t">"&gt;</span></div>
<svg class="a" style="left:917.4px;top:128.5px" width="6" height="6" viewBox="0 0 6 6"><path d="M1.2 0.3V5.7L5.2 3Z" fill="#5f6368"/></svg>
<div class="a nw mk" style="left:925.00px;top:126.70px;font-family:'Liberation Mono',monospace;font-size:8.28px;line-height:12px;color:#202124;"><span class="t">&lt;head&gt;…&lt;/head&gt;</span></div>
<svg class="a" style="left:917.4px;top:140.8px" width="6" height="6" viewBox="0 0 6 6"><path d="M0.3 1.2H5.7L3 5.2Z" fill="#5f6368"/></svg>
<div class="a nw mk" style="left:925.00px;top:139.00px;font-family:'Liberation Mono',monospace;font-size:8.28px;line-height:12px;color:#202124;"><span class="t">&lt;body&gt;</span></div>
<div class="a" style="left:907.40px;top:156.60px;width:1.60px;height:1.60px;background:#56617a;border-radius:50%"></div>
<div class="a" style="left:910.40px;top:156.60px;width:1.60px;height:1.60px;background:#56617a;border-radius:50%"></div>
<div class="a" style="left:913.40px;top:156.60px;width:1.60px;height:1.60px;background:#56617a;border-radius:50%"></div>
<svg class="a" style="left:926.2px;top:153.4px" width="6" height="6" viewBox="0 0 6 6"><path d="M1.2 0.3V5.7L5.2 3Z" fill="#5f6368"/></svg>
<div class="a nw mk" style="left:933.75px;top:151.50px;font-family:'Liberation Mono',monospace;font-size:8.28px;line-height:12px;color:#202124;"><span class="t">&lt;template</span><span class="n"> data-ref</span><span class="t">="</span><span class="v">pagedjs-content</span><span class="t">"&gt;…&lt;/template&gt;</span><span style="color:#888"> == </span><span style="color:#888;font-style:italic">$0</span></div>
<svg class="a" style="left:926.2px;top:165.8px" width="6" height="6" viewBox="0 0 6 6"><path d="M0.3 1.2H5.7L3 5.2Z" fill="#5f6368"/></svg>
<div class="a nw mk" style="left:933.75px;top:163.90px;font-family:'Liberation Mono',monospace;font-size:8.28px;line-height:12px;color:#202124;"><span class="t">&lt;div</span><span class="n"> class</span><span class="t">="</span><span class="v">pagedjs_pages</span><span class="t">"</span><span class="n"> style</span><span class="t">="</span><span class="v">--pagedjs-page-count:433;</span><span class="t">"&gt;</span></div>
<div class="a" style="left:1239.70px;top:165.30px;width:25.30px;height:10.10px;background:#f5f5f5;border:1px solid #d0d0d0;border-radius:5px"></div>
<div class="a nw mk" style="left:1245.00px;top:166.19px;font-family:'Liberation Mono',monospace;font-size:6.8px;line-height:10px;color:#303030;">flex</div>
<div class="a" style="left:905px;top:99px;width:481px;height:710.5px;overflow:hidden"><div class="a" style="left:-905px;top:-99px;width:1600px;height:900px">
<div class="a nw mk" style="left:942.50px;top:177.25px;font-family:'Liberation Mono',monospace;font-size:8.28px;line-height:12px;color:#202124;"><span class="t">&lt;div </span><span class="n">class</span><span class="t">="</span><span class="v">pagedjs_page pagedjs_first_page pagedjs_right_page</span><span class="t">" </span><span class="n">data-page-number</span><span class="t">="</span><span class="v">1</span><span class="t">" </span><span class="n">id</span><span class="t">=</span></div>
<svg class="a" style="left:935.0px;top:179.2px" width="6" height="6" viewBox="0 0 6 6"><path d="M1.2 0.3V5.7L5.2 3Z" fill="#5f6368"/></svg>
<div class="a nw mk" style="left:942.50px;top:188.45px;font-family:'Liberation Mono',monospace;font-size:8.28px;line-height:12px;color:#202124;"><span class="t">"</span><span class="v">page-1</span><span class="t">" </span><span class="n">style</span><span class="t">="</span><span class="v">--pagedjs-string-first-title:""; --pagedjs-string-last-title:""; --pagedj</span></div>
<div class="a nw mk" style="left:942.50px;top:199.65px;font-family:'Liberation Mono',monospace;font-size:8.28px;line-height:12px;color:#202124;"><span class="v">s-string-start-title:""; --pagedjs-string-first-except-title:"";</span><span class="t">"&gt;…&lt;/div&gt;</span></div>
<div class="a nw mk" style="left:942.50px;top:211.73px;font-family:'Liberation Mono',monospace;font-size:8.28px;line-height:12px;color:#202124;"><span class="t">&lt;div </span><span class="n">class</span><span class="t">="</span><span class="v">pagedjs_page pagedjs_blank_page pagedjs_left_page</span><span class="t">" </span><span class="n">data-page-number</span><span class="t">="</span><span class="v">2</span><span class="t">" </span><span class="n">id</span><span class="t">="</span><span class="v">p</span></div>
<svg class="a" style="left:935.0px;top:213.6px" width="6" height="6" viewBox="0 0 6 6"><path d="M1.2 0.3V5.7L5.2 3Z" fill="#5f6368"/></svg>
<div class="a nw mk" style="left:942.50px;top:222.93px;font-family:'Liberation Mono',monospace;font-size:8.28px;line-height:12px;color:#202124;"><span class="v">age-2</span><span class="t">" </span><span class="n">style</span><span class="t">="</span><span class="v">--pagedjs-string-first-title:""; --pagedjs-string-last-title:""; --pagedjs-</span></div>
<div class="a nw mk" style="left:942.50px;top:234.14px;font-family:'Liberation Mono',monospace;font-size:8.28px;line-height:12px;color:#202124;"><span class="v">string-start-title:""; --pagedjs-string-first-except-title:"";</span><span class="t">"&gt;…&lt;/div&gt;</span></div>
<div class="a nw mk" style="left:942.50px;top:246.21px;font-family:'Liberation Mono',monospace;font-size:8.28px;line-height:12px;color:#202124;"><span class="t">&lt;div </span><span class="n">class</span><span class="t">="</span><span class="v">pagedjs_page pagedjs_right_page</span><span class="t">" </span><span class="n">data-page-number</span><span class="t">="</span><span class="v">3</span><span class="t">" </span><span class="n">id</span><span class="t">="</span><span class="v">page-3</span><span class="t">" </span><span class="n">data-break-</span></div>
<svg class="a" style="left:935.0px;top:248.1px" width="6" height="6" viewBox="0 0 6 6"><path d="M1.2 0.3V5.7L5.2 3Z" fill="#5f6368"/></svg>
<div class="a nw mk" style="left:942.50px;top:257.42px;font-family:'Liberation Mono',monospace;font-size:8.28px;line-height:12px;color:#202124;"><span class="n">before</span><span class="t">="</span><span class="v">right</span><span class="t">" </span><span class="n">style</span><span class="t">="</span><span class="v">--pagedjs-string-first-title:""; --pagedjs-string-last-title:""; --</span></div>
<div class="a nw mk" style="left:942.50px;top:268.62px;font-family:'Liberation Mono',monospace;font-size:8.28px;line-height:12px;color:#202124;"><span class="v">pagedjs-string-start-title:""; --pagedjs-string-first-except-title:"";</span><span class="t">"&gt;…&lt;/div&gt;</span></div>
<div class="a nw mk" style="left:942.50px;top:280.70px;font-family:'Liberation Mono',monospace;font-size:8.28px;line-height:12px;color:#202124;"><span class="t">&lt;div </span><span class="n">class</span><span class="t">="</span><span class="v">pagedjs_page pagedjs_left_page</span><span class="t">" </span><span class="n">data-page-number</span><span class="t">="</span><span class="v">4</span><span class="t">" </span><span class="n">id</span><span class="t">="</span><span class="v">page-4</span><span class="t">" </span><span class="n">data-break-</span></div>
<svg class="a" style="left:935.0px;top:282.6px" width="6" height="6" viewBox="0 0 6 6"><path d="M1.2 0.3V5.7L5.2 3Z" fill="#5f6368"/></svg>
<div class="a nw mk" style="left:942.50px;top:291.90px;font-family:'Liberation Mono',monospace;font-size:8.28px;line-height:12px;color:#202124;"><span class="n">before</span><span class="t">="</span><span class="v">always</span><span class="t">" </span><span class="n">style</span><span class="t">="</span><span class="v">--pagedjs-string-first-title:"Tiráž"; --pagedjs-string-last-title:</span></div>
<div class="a nw mk" style="left:942.50px;top:303.11px;font-family:'Liberation Mono',monospace;font-size:8.28px;line-height:12px;color:#202124;"><span class="v">"Tiráž"; --pagedjs-string-start-title:""; --pagedjs-string-first-except-title:"";</span><span class="t">"&gt;…</span></div>
<div class="a nw mk" style="left:942.50px;top:314.31px;font-family:'Liberation Mono',monospace;font-size:8.28px;line-height:12px;color:#202124;"><span class="t">&lt;/div&gt;</span></div>
<div class="a nw mk" style="left:942.50px;top:326.39px;font-family:'Liberation Mono',monospace;font-size:8.28px;line-height:12px;color:#202124;"><span class="t">&lt;div </span><span class="n">class</span><span class="t">="</span><span class="v">pagedjs_page pagedjs_right_page pagedjs_named_page pagedjs_pageContentMain_pa</span></div>
<svg class="a" style="left:935.0px;top:328.3px" width="6" height="6" viewBox="0 0 6 6"><path d="M1.2 0.3V5.7L5.2 3Z" fill="#5f6368"/></svg>
<div class="a nw mk" style="left:942.50px;top:337.59px;font-family:'Liberation Mono',monospace;font-size:8.28px;line-height:12px;color:#202124;"><span class="v">ge</span><span class="t">" </span><span class="n">data-page-number</span><span class="t">="</span><span class="v">5</span><span class="t">" </span><span class="n">id</span><span class="t">="</span><span class="v">page-5</span><span class="t">" </span><span class="n">data-break-before</span><span class="t">="</span><span class="v">right</span><span class="t">" </span><span class="n">style</span><span class="t">="</span><span class="v">--pagedjs-string-fi</span></div>
<div class="a nw mk" style="left:942.50px;top:348.79px;font-family:'Liberation Mono',monospace;font-size:8.28px;line-height:12px;color:#202124;"><span class="v">rst-title:"Předmluva"; --pagedjs-string-last-title:"Předmluva"; --pagedjs-string-start-ti</span></div>
<div class="a nw mk" style="left:942.50px;top:360.00px;font-family:'Liberation Mono',monospace;font-size:8.28px;line-height:12px;color:#202124;"><span class="v">tle:"Předmluva"; --pagedjs-string-first-except-title:"";</span><span class="t">"&gt;…&lt;/div&gt;</span></div>
<div class="a nw mk" style="left:942.50px;top:372.07px;font-family:'Liberation Mono',monospace;font-size:8.28px;line-height:12px;color:#202124;"><span class="t">&lt;div </span><span class="n">class</span><span class="t">="</span><span class="v">pagedjs_page pagedjs_left_page pagedjs_named_page pagedjs_pageContentMain_pag</span></div>
<svg class="a" style="left:935.0px;top:374.0px" width="6" height="6" viewBox="0 0 6 6"><path d="M1.2 0.3V5.7L5.2 3Z" fill="#5f6368"/></svg>
<div class="a nw mk" style="left:942.50px;top:383.28px;font-family:'Liberation Mono',monospace;font-size:8.28px;line-height:12px;color:#202124;"><span class="v">e</span><span class="t">" </span><span class="n">data-page-number</span><span class="t">="</span><span class="v">6</span><span class="t">" </span><span class="n">id</span><span class="t">="</span><span class="v">page-6</span><span class="t">" </span><span class="n">style</span><span class="t">="</span><span class="v">--pagedjs-string-first-title:"Pro koho knížka </span></div>
<div class="a nw mk" style="left:942.50px;top:394.48px;font-family:'Liberation Mono',monospace;font-size:8.28px;line-height:12px;color:#202124;"><span class="v">je a jak ji číst?"; --pagedjs-string-last-title:"Pro koho knížka je a jak ji číst?"; --pa</span></div>
<div class="a nw mk" style="left:942.50px;top:405.69px;font-family:'Liberation Mono',monospace;font-size:8.28px;line-height:12px;color:#202124;"><span class="v">gedjs-string-start-title:"Pro koho knížka je a jak ji číst?"; --pagedjs-string-first-exce</span></div>
<div class="a nw mk" style="left:942.50px;top:416.89px;font-family:'Liberation Mono',monospace;font-size:8.28px;line-height:12px;color:#202124;"><span class="v">pt-title:"";</span><span class="t">"&gt;…&lt;/div&gt;</span></div>
<div class="a nw mk" style="left:942.50px;top:428.97px;font-family:'Liberation Mono',monospace;font-size:8.28px;line-height:12px;color:#202124;"><span class="t">&lt;div </span><span class="n">class</span><span class="t">="</span><span class="v">pagedjs_page pagedjs_right_page pagedjs_named_page pagedjs_pageContentMain_pa</span></div>
<svg class="a" style="left:935.0px;top:430.9px" width="6" height="6" viewBox="0 0 6 6"><path d="M1.2 0.3V5.7L5.2 3Z" fill="#5f6368"/></svg>
<div class="a nw mk" style="left:942.50px;top:440.17px;font-family:'Liberation Mono',monospace;font-size:8.28px;line-height:12px;color:#202124;"><span class="v">ge</span><span class="t">" </span><span class="n">data-page-number</span><span class="t">="</span><span class="v">7</span><span class="t">" </span><span class="n">id</span><span class="t">="</span><span class="v">page-7</span><span class="t">" </span><span class="n">style</span><span class="t">="</span><span class="v">--pagedjs-string-first-title:"Pro koho knížka</span></div>
<div class="a nw mk" style="left:942.50px;top:451.37px;font-family:'Liberation Mono',monospace;font-size:8.28px;line-height:12px;color:#202124;"><span class="v">je a jak ji číst?"; --pagedjs-string-last-title:"Pro koho knížka je a jak ji číst?"; --pa</span></div>
<div class="a nw mk" style="left:942.50px;top:462.58px;font-family:'Liberation Mono',monospace;font-size:8.28px;line-height:12px;color:#202124;"><span class="v">gedjs-string-start-title:"Pro koho knížka je a jak ji číst?"; --pagedjs-string-first-exce</span></div>
<div class="a nw mk" style="left:942.50px;top:473.78px;font-family:'Liberation Mono',monospace;font-size:8.28px;line-height:12px;color:#202124;"><span class="v">pt-title:"Pro koho knížka je a jak ji číst?";</span><span class="t">"&gt;…&lt;/div&gt;</span></div>
<div class="a nw mk" style="left:942.50px;top:485.86px;font-family:'Liberation Mono',monospace;font-size:8.28px;line-height:12px;color:#202124;"><span class="t">&lt;div </span><span class="n">class</span><span class="t">="</span><span class="v">pagedjs_page pagedjs_left_page pagedjs_named_page pagedjs_pageContentMain_pag</span></div>
<svg class="a" style="left:935.0px;top:487.8px" width="6" height="6" viewBox="0 0 6 6"><path d="M1.2 0.3V5.7L5.2 3Z" fill="#5f6368"/></svg>
<div class="a nw mk" style="left:942.50px;top:497.06px;font-family:'Liberation Mono',monospace;font-size:8.28px;line-height:12px;color:#202124;"><span class="v">e</span><span class="t">" </span><span class="n">data-page-number</span><span class="t">="</span><span class="v">8</span><span class="t">" </span><span class="n">id</span><span class="t">="</span><span class="v">page-8</span><span class="t">" </span><span class="n">data-break-before</span><span class="t">="</span><span class="v">always</span><span class="t">" </span><span class="n">style</span><span class="t">="</span><span class="v">--pagedjs-string-fi</span></div>
<div class="a nw mk" style="left:942.50px;top:508.27px;font-family:'Liberation Mono',monospace;font-size:8.28px;line-height:12px;color:#202124;"><span class="v">rst-title:"Pro koho knížka je a jak ji číst?"; --pagedjs-string-last-title:"Pro koho kníž</span></div>
<div class="a nw mk" style="left:942.50px;top:519.47px;font-family:'Liberation Mono',monospace;font-size:8.28px;line-height:12px;color:#202124;"><span class="v">ka je a jak ji číst?"; --pagedjs-string-start-title:"Pro koho knížka je a jak ji číst?";</span></div>
<div class="a nw mk" style="left:942.50px;top:530.67px;font-family:'Liberation Mono',monospace;font-size:8.28px;line-height:12px;color:#202124;"><span class="v">--pagedjs-string-first-except-title:"Pro koho knížka je a jak ji číst?";</span><span class="t">"&gt;…&lt;/div&gt;</span></div>
<div class="a nw mk" style="left:942.50px;top:542.75px;font-family:'Liberation Mono',monospace;font-size:8.28px;line-height:12px;color:#202124;"><span class="t">&lt;div </span><span class="n">class</span><span class="t">="</span><span class="v">pagedjs_page pagedjs_right_page pagedjs_named_page pagedjs_pageContentMain_pa</span></div>
<svg class="a" style="left:935.0px;top:544.7px" width="6" height="6" viewBox="0 0 6 6"><path d="M1.2 0.3V5.7L5.2 3Z" fill="#5f6368"/></svg>
<div class="a nw mk" style="left:942.50px;top:553.95px;font-family:'Liberation Mono',monospace;font-size:8.28px;line-height:12px;color:#202124;"><span class="v">ge</span><span class="t">" </span><span class="n">data-page-number</span><span class="t">="</span><span class="v">9</span><span class="t">" </span><span class="n">id</span><span class="t">="</span><span class="v">page-9</span><span class="t">" </span><span class="n">style</span><span class="t">="</span><span class="v">--pagedjs-string-first-title:"Pro koho knížka</span></div>
<div class="a nw mk" style="left:942.50px;top:565.16px;font-family:'Liberation Mono',monospace;font-size:8.28px;line-height:12px;color:#202124;"><span class="v">je a jak ji číst?"; --pagedjs-string-last-title:"Pro koho knížka je a jak ji číst?"; --pa</span></div>
<div class="a nw mk" style="left:942.50px;top:576.36px;font-family:'Liberation Mono',monospace;font-size:8.28px;line-height:12px;color:#202124;"><span class="v">gedjs-string-start-title:"Pro koho knížka je a jak ji číst?"; --pagedjs-string-first-exce</span></div>
<div class="a nw mk" style="left:942.50px;top:587.57px;font-family:'Liberation Mono',monospace;font-size:8.28px;line-height:12px;color:#202124;"><span class="v">pt-title:"Pro koho knížka je a jak ji číst?";</span><span class="t">"&gt;…&lt;/div&gt;</span></div>
<div class="a nw mk" style="left:942.50px;top:599.64px;font-family:'Liberation Mono',monospace;font-size:8.28px;line-height:12px;color:#202124;"><span class="t">&lt;div </span><span class="n">class</span><span class="t">="</span><span class="v">pagedjs_page pagedjs_blank_page pagedjs_left_page</span><span class="t">" </span><span class="n">data-page-number</span><span class="t">="</span><span class="v">10</span><span class="t">" </span><span class="n">id</span><span class="t">=</span></div>
<svg class="a" style="left:935.0px;top:601.5px" width="6" height="6" viewBox="0 0 6 6"><path d="M1.2 0.3V5.7L5.2 3Z" fill="#5f6368"/></svg>
<div class="a nw mk" style="left:942.50px;top:610.85px;font-family:'Liberation Mono',monospace;font-size:8.28px;line-height:12px;color:#202124;"><span class="t">"</span><span class="v">page-10</span><span class="t">" </span><span class="n">style</span><span class="t">="</span><span class="v">--pagedjs-string-first-title:"Pro koho knížka je a jak ji číst?"; --page</span></div>
<div class="a nw mk" style="left:942.50px;top:622.05px;font-family:'Liberation Mono',monospace;font-size:8.28px;line-height:12px;color:#202124;"><span class="v">djs-string-last-title:"Pro koho knížka je a jak ji číst?"; --pagedjs-string-start-title:</span></div>
<div class="a nw mk" style="left:942.50px;top:633.25px;font-family:'Liberation Mono',monospace;font-size:8.28px;line-height:12px;color:#202124;"><span class="v">"Pro koho knížka je a jak ji číst?"; --pagedjs-string-first-except-title:"Pro koho knížka</span></div>
<div class="a nw mk" style="left:942.50px;top:644.46px;font-family:'Liberation Mono',monospace;font-size:8.28px;line-height:12px;color:#202124;"><span class="v">je a jak ji číst?";</span><span class="t">"&gt;…&lt;/div&gt;</span></div>
<div class="a nw mk" style="left:942.50px;top:656.53px;font-family:'Liberation Mono',monospace;font-size:8.28px;line-height:12px;color:#202124;"><span class="t">&lt;div </span><span class="n">class</span><span class="t">="</span><span class="v">pagedjs_page pagedjs_right_page pagedjs_named_page pagedjs_pageContentMain_pa</span></div>
<svg class="a" style="left:935.0px;top:658.4px" width="6" height="6" viewBox="0 0 6 6"><path d="M1.2 0.3V5.7L5.2 3Z" fill="#5f6368"/></svg>
<div class="a nw mk" style="left:942.50px;top:667.74px;font-family:'Liberation Mono',monospace;font-size:8.28px;line-height:12px;color:#202124;"><span class="v">ge</span><span class="t">" </span><span class="n">data-page-number</span><span class="t">="</span><span class="v">11</span><span class="t">" </span><span class="n">id</span><span class="t">="</span><span class="v">page-11</span><span class="t">" </span><span class="n">data-break-before</span><span class="t">="</span><span class="v">right</span><span class="t">" </span><span class="n">style</span><span class="t">="</span><span class="v">--pagedjs-string-</span></div>
<div class="a nw mk" style="left:942.50px;top:678.94px;font-family:'Liberation Mono',monospace;font-size:8.28px;line-height:12px;color:#202124;"><span class="v">first-title:"Kapitola 1: Začínáme s layouty v CSS"; --pagedjs-string-last-title:"Kapitola</span></div>
<div class="a nw mk" style="left:942.50px;top:690.15px;font-family:'Liberation Mono',monospace;font-size:8.28px;line-height:12px;color:#202124;"><span class="v">1: Začínáme s layouty v CSS"; --pagedjs-string-start-title:"Pro koho knížka je a jak ji č</span></div>
<div class="a nw mk" style="left:942.50px;top:701.35px;font-family:'Liberation Mono',monospace;font-size:8.28px;line-height:12px;color:#202124;"><span class="v">íst?"; --pagedjs-string-first-except-title:"";</span><span class="t">"&gt;…&lt;/div&gt;</span></div>
<div class="a nw mk" style="left:942.50px;top:713.43px;font-family:'Liberation Mono',monospace;font-size:8.28px;line-height:12px;color:#202124;"><span class="t">&lt;div </span><span class="n">class</span><span class="t">="</span><span class="v">pagedjs_page pagedjs_left_page pagedjs_named_page pagedjs_pageContentMain_pag</span></div>
<svg class="a" style="left:935.0px;top:715.3px" width="6" height="6" viewBox="0 0 6 6"><path d="M1.2 0.3V5.7L5.2 3Z" fill="#5f6368"/></svg>
<div class="a nw mk" style="left:942.50px;top:724.63px;font-family:'Liberation Mono',monospace;font-size:8.28px;line-height:12px;color:#202124;"><span class="v">e</span><span class="t">" </span><span class="n">data-page-number</span><span class="t">="</span><span class="v">12</span><span class="t">" </span><span class="n">id</span><span class="t">="</span><span class="v">page-12</span><span class="t">" </span><span class="n">data-break-before</span><span class="t">="</span><span class="v">always</span><span class="t">" </span><span class="n">style</span><span class="t">="</span><span class="v">--pagedjs-string-</span></div>
<div class="a nw mk" style="left:942.50px;top:735.83px;font-family:'Liberation Mono',monospace;font-size:8.28px;line-height:12px;color:#202124;"><span class="v">first-title:"Kapitola 1: Začínáme s layouty v CSS"; --pagedjs-string-last-title:"Kapitola</span></div>
<div class="a nw mk" style="left:942.50px;top:747.04px;font-family:'Liberation Mono',monospace;font-size:8.28px;line-height:12px;color:#202124;"><span class="v">1: Začínáme s layouty v CSS"; --pagedjs-string-start-title:"Kapitola 1: Začínáme s layout</span></div>
<div class="a nw mk" style="left:942.50px;top:758.24px;font-family:'Liberation Mono',monospace;font-size:8.28px;line-height:12px;color:#202124;"><span class="v">y v CSS"; --pagedjs-string-first-except-title:"Kapitola 1: Začínáme s layouty v CSS";</span><span class="t">"&gt;…</span></div>
<div class="a nw mk" style="left:942.50px;top:769.45px;font-family:'Liberation Mono',monospace;font-size:8.28px;line-height:12px;color:#202124;"><span class="t">&lt;/div&gt;</span></div>
<div class="a nw mk" style="left:942.50px;top:781.52px;font-family:'Liberation Mono',monospace;font-size:8.28px;line-height:12px;color:#202124;"><span class="t">&lt;div </span><span class="n">class</span><span class="t">="</span><span class="v">pagedjs_page pagedjs_right_page pagedjs_named_page pagedjs_pageContentMain_pa</span></div>
<svg class="a" style="left:935.0px;top:783.4px" width="6" height="6" viewBox="0 0 6 6"><path d="M1.2 0.3V5.7L5.2 3Z" fill="#5f6368"/></svg>
<div class="a nw mk" style="left:942.50px;top:792.73px;font-family:'Liberation Mono',monospace;font-size:8.28px;line-height:12px;color:#202124;"><span class="v">ge</span><span class="t">" </span><span class="n">data-page-number</span><span class="t">="</span><span class="v">13</span><span class="t">" </span><span class="n">id</span><span class="t">="</span><span class="v">page-13</span><span class="t">" </span><span class="n">style</span><span class="t">="</span><span class="v">--pagedjs-string-first-title:"Kapitola 1: Z</span></div>
<div class="a nw mk" style="left:942.50px;top:803.93px;font-family:'Liberation Mono',monospace;font-size:8.28px;line-height:12px;color:#202124;"><span class="v">ačínáme s layouty v CSS"; --pagedjs-string-last-title:"Kapitola 1: Začínáme s layouty v C</span></div>
<div class="a nw mk" style="left:942.50px;top:815.13px;font-family:'Liberation Mono',monospace;font-size:8.28px;line-height:12px;color:#202124;"><span class="v">SS"; --pagedjs-string-start-title:"Kapitola 1: Začínáme s layouty v CSS"; --pagedjs-strin</span></div>
<div class="a nw mk" style="left:942.50px;top:826.34px;font-family:'Liberation Mono',monospace;font-size:8.28px;line-height:12px;color:#202124;"><span class="v">g-first-except-title:"Kapitola 1: Začínáme s layouty v CSS";</span><span class="t">"&gt;…&lt;/div&gt;</span></div>
</div></div>
<div class="a" style="left:1385.80px;top:99.00px;width:183.20px;height:728.00px;background:#fff;border-left:1px solid #d5d7db"></div>
<div class="a" style="left:1386.80px;top:99.20px;width:182.20px;height:20.60px;background:#f1f3f4;border-bottom:1px solid #d5d7db"></div>
<div class="a nw" style="left:1394.70px;top:102.48px;font-family:'Liberation Sans',sans-serif;font-size:9px;line-height:14px;color:#202124;">Styles</div>
<div class="a nw" style="left:1433.60px;top:102.48px;font-family:'Liberation Sans',sans-serif;font-size:9px;line-height:14px;color:#5f6368;">Computed</div>
<div class="a nw" style="left:1491.70px;top:102.48px;font-family:'Liberation Sans',sans-serif;font-size:9px;line-height:14px;color:#5f6368;">Layout</div>
<svg class="a" style="left:1532px;top:105px" width="10" height="9" viewBox="0 0 10 9"><path d="M1.5 1L4.6 4.5L1.5 8M5.3 1L8.4 4.5L5.3 8" fill="none" stroke="#5f6368" stroke-width="1"/></svg>
<div class="a" style="left:1387.00px;top:118.00px;width:39.00px;height:2.00px;background:#1a73e8;"></div>
<div class="a" style="left:1386.80px;top:120.50px;width:182.20px;height:20.00px;background:#f1f3f4;border-bottom:1px solid #dadce0"></div>
<div class="a" style="left:1388.00px;top:122.00px;width:80.00px;height:14.70px;background:#fff;"></div>
<div class="a nw" style="left:1392.70px;top:123.18px;font-family:'Liberation Sans',sans-serif;font-size:9px;line-height:14px;color:#5f6368;">Filter</div>
<div class="a nw mk" style="left:1476.70px;top:125.10px;font-family:'Liberation Mono',monospace;font-size:8.28px;line-height:12px;color:#202124;font-weight:bold">:hov</div>
<div class="a nw mk" style="left:1504.00px;top:125.10px;font-family:'Liberation Mono',monospace;font-size:8.28px;line-height:12px;color:#202124;font-weight:bold">.cls</div>
<svg class="a" style="left:1532px;top:123px" width="36" height="15" viewBox="0 0 36 15">
<path d="M6 3V11M2 7H10" stroke="#202124" stroke-width="1.3"/>
<path d="M11.2 12.8L13.6 10.4V12.8Z" fill="#202124"/>
<rect x="21" y="2.4" width="11" height="9.4" fill="none" stroke="#5f6368" stroke-width="1"/>
<path d="M28.6 3V11.4" stroke="#5f6368" stroke-width="1"/>
<path d="M26.6 4.8V9.2L23.6 7Z" fill="#202124"/>
</svg>
<div class="a nw mk" style="left:1390.00px;top:141.20px;font-family:'Liberation Mono',monospace;font-size:8.28px;line-height:12px;color:#202124;"><span style="color:#8a8a8a">element.style</span><span style="color:#202124"> {</span></div>
<div class="a nw mk" style="left:1390.00px;top:152.50px;font-family:'Liberation Mono',monospace;font-size:8.28px;line-height:12px;color:#202124;"><span style="color:#202124">}</span></div>
<div class="a" style="left:1386.80px;top:166.20px;width:182.20px;height:1.00px;background:#e4e4e4;"></div>
<div class="a nw mk" style="left:1390.00px;top:168.50px;font-family:'Liberation Mono',monospace;font-size:8.28px;line-height:12px;color:#202124;font-style:italic"><span style="color:#202124">template {</span></div>
<div class="a nw mk" style="left:1464.23px;top:168.50px;font-family:'Liberation Mono',monospace;font-size:8.28px;line-height:12px;color:#5f6368;font-style:italic;">user agent stylesheet</div>
<div class="a nw mk" style="left:1403.70px;top:180.50px;font-family:'Liberation Mono',monospace;font-size:8.28px;line-height:12px;color:#202124;font-style:italic"><span style="color:#c80000">display</span><span style="color:#202124">: none;</span></div>
<div class="a nw mk" style="left:1390.00px;top:191.20px;font-family:'Liberation Mono',monospace;font-size:8.28px;line-height:12px;color:#202124;"><span style="color:#202124">}</span></div>
<div class="a" style="left:1386.80px;top:203.50px;width:182.20px;height:1.00px;background:#e4e4e4;"></div>
<div class="a" style="left:1386.80px;top:204.50px;width:182.20px;height:18.00px;background:#f3f3f3;"></div>
<div class="a nw" style="left:1391.00px;top:206.68px;font-family:'Liberation Sans',sans-serif;font-size:9px;line-height:14px;color:#5f6368;">Inherited from</div>
<div class="a nw mk" style="left:1451.00px;top:208.10px;font-family:'Liberation Mono',monospace;font-size:8.28px;line-height:12px;color:#c80000;">body</div>
<div class="a" style="left:1386.80px;top:222.10px;width:182.20px;height:1.00px;background:#e4e4e4;"></div>
<div class="a nw mk" style="left:1390.00px;top:224.10px;font-family:'Liberation Mono',monospace;font-size:8.28px;line-height:12px;color:#202124;"><span style="color:#202124">body,</span><span style="color:#8a8a8a"> h1, h2, h3, h4, h5,</span></div>
<div class="a nw mk" style="left:1533.81px;top:224.10px;font-family:'Liberation Mono',monospace;font-size:8.28px;line-height:12px;color:#5f6368;">&lt;style&gt;</div>
<div class="a nw mk" style="left:1390.00px;top:233.50px;font-family:'Liberation Mono',monospace;font-size:8.28px;line-height:12px;color:#202124;"><span style="color:#8a8a8a">h6, blockquote,</span></div>
<div class="a nw mk" style="left:1390.00px;top:242.90px;font-family:'Liberation Mono',monospace;font-size:8.28px;line-height:12px;color:#202124;"><span style="color:#8a8a8a">figcaption, .colored-box h2</span><span style="color:#202124"> {</span></div>
<div class="a nw mk" style="left:1404.00px;top:254.10px;font-family:'Liberation Mono',monospace;font-size:8.28px;line-height:12px;color:#202124;"><span style="color:#c80000">color</span><span style="color:#202124">: </span><span style="color:#202124">  #000000;</span></div>
<div class="a" style="left:1440.40px;top:255.80px;width:6.80px;height:6.80px;background:#000;border:1px solid #555"></div>
<div class="a nw mk" style="left:1390.00px;top:264.50px;font-family:'Liberation Mono',monospace;font-size:8.28px;line-height:12px;color:#202124;"><span style="color:#202124">}</span></div>
<div class="a" style="left:1386.80px;top:278.10px;width:182.20px;height:1.00px;background:#e4e4e4;"></div>
<div class="a nw mk" style="left:1390.00px;top:280.10px;font-family:'Liberation Mono',monospace;font-size:8.28px;line-height:12px;color:#202124;"><span style="color:#202124">body,</span><span style="color:#8a8a8a"> h1, h2, h3, h4, h5,</span></div>
<div class="a nw mk" style="left:1533.81px;top:280.10px;font-family:'Liberation Mono',monospace;font-size:8.28px;line-height:12px;color:#5f6368;">&lt;style&gt;</div>
<div class="a nw mk" style="left:1390.00px;top:289.10px;font-family:'Liberation Mono',monospace;font-size:8.28px;line-height:12px;color:#202124;"><span style="color:#8a8a8a">h6</span><span style="color:#202124"> {</span></div>
<div class="a nw mk" style="left:1404.00px;top:300.50px;font-family:'Liberation Mono',monospace;font-size:8.28px;line-height:12px;color:#202124;text-decoration:line-through;text-decoration-color:#9a9a9a;text-decoration-thickness:0.7px"><span style="color:#c80000">color</span><span style="color:#202124">:   #2F2B00;</span></div>
<div class="a" style="left:1440.40px;top:302.20px;width:6.80px;height:6.80px;background:#2f2b00;border:1px solid #555"></div>
<div class="a nw mk" style="left:1390.00px;top:310.50px;font-family:'Liberation Mono',monospace;font-size:8.28px;line-height:12px;color:#202124;"><span style="color:#202124">}</span></div>
<div class="a" style="left:1386.80px;top:323.90px;width:182.20px;height:1.00px;background:#e4e4e4;"></div>
<div class="a nw mk" style="left:1390.00px;top:326.10px;font-family:'Liberation Mono',monospace;font-size:8.28px;line-height:12px;color:#202124;"><span style="color:#202124">body {</span></div>
<div class="a nw mk" style="left:1533.81px;top:326.10px;font-family:'Liberation Mono',monospace;font-size:8.28px;line-height:12px;color:#5f6368;">&lt;style&gt;</div>
<div class="a nw mk" style="left:1404.00px;top:338.10px;font-family:'Liberation Mono',monospace;font-size:8.28px;line-height:12px;color:#202124;"><span style="color:#c80000">font-family</span><span style="color:#202124">:</span></div>
<div class="a nw mk" style="left:1419.00px;top:347.50px;font-family:'Liberation Mono',monospace;font-size:8.28px;line-height:12px;color:#202124;"><span style="color:#202124">"Capita",Georgia,Times,serif;</span></div>
<div class="a nw mk" style="left:1390.00px;top:356.50px;font-family:'Liberation Mono',monospace;font-size:8.28px;line-height:12px;color:#202124;"><span style="color:#202124">}</span></div>
<div class="a" style="left:1386.80px;top:369.90px;width:182.20px;height:1.00px;background:#e4e4e4;"></div>
<div class="a" style="left:1386.80px;top:370.90px;width:182.20px;height:18.60px;background:#f3f3f3;"></div>
<div class="a nw" style="left:1391.00px;top:372.88px;font-family:'Liberation Sans',sans-serif;font-size:9px;line-height:14px;color:#5f6368;">Inherited from</div>
<div class="a nw mk" style="left:1451.00px;top:374.30px;font-family:'Liberation Mono',monospace;font-size:8.28px;line-height:12px;color:#c80000;">html</div>
<div class="a" style="left:1386.80px;top:389.10px;width:182.20px;height:1.00px;background:#e4e4e4;"></div>
<div class="a nw mk" style="left:1390.00px;top:390.60px;font-family:'Liberation Mono',monospace;font-size:8.28px;line-height:12px;color:#202124;"><span style="color:#202124">:root {</span></div>
<div class="a nw mk" style="left:1533.81px;top:390.60px;font-family:'Liberation Mono',monospace;font-size:8.28px;line-height:12px;color:#5f6368;">&lt;style&gt;</div>
<div class="a nw mk" style="left:1404.00px;top:402.20px;font-family:'Liberation Mono',monospace;font-size:8.28px;line-height:12px;color:#202124;"><span style="color:#c80000">--color-background</span><span style="color:#202124">:</span></div>
<div class="a" style="left:1432.90px;top:413.60px;width:6.80px;height:6.80px;background:#f5f5f5;border:1px solid #bdbdbd"></div>
<div class="a nw mk" style="left:1441.80px;top:411.90px;font-family:'Liberation Mono',monospace;font-size:8.28px;line-height:12px;color:#202124;"><span style="color:#202124">whitesmoke;</span></div>
<div class="a" style="left:1498.43px;top:423.40px;width:6.80px;height:6.80px;background:#cfcfcf;border:1px solid #bdbdbd"></div>
<div class="a nw mk" style="left:1404.00px;top:421.70px;font-family:'Liberation Mono',monospace;font-size:8.28px;line-height:12px;color:#202124;"><span style="color:#c80000">--color-pageSheet</span><span style="color:#202124">: </span><span style="color:#202124">  #cfcfcf;</span></div>
<div class="a" style="left:1488.49px;top:434.10px;width:6.80px;height:6.80px;background:#ee82ee;border:1px solid #bdbdbd"></div>
<div class="a nw mk" style="left:1404.00px;top:432.40px;font-family:'Liberation Mono',monospace;font-size:8.28px;line-height:12px;color:#202124;"><span style="color:#c80000">--color-pageBox</span><span style="color:#202124">: </span><span style="color:#202124">  violet;</span></div>
<div class="a" style="left:1478.55px;top:444.20px;width:6.80px;height:6.80px;background:#ffffff;border:1px solid #bdbdbd"></div>
<div class="a nw mk" style="left:1404.00px;top:442.50px;font-family:'Liberation Mono',monospace;font-size:8.28px;line-height:12px;color:#202124;"><span style="color:#c80000">--color-paper</span><span style="color:#202124">: </span><span style="color:#202124">  white;</span></div>
<div class="a nw mk" style="left:1404.00px;top:453.20px;font-family:'Liberation Mono',monospace;font-size:8.28px;line-height:12px;color:#202124;"><span style="color:#c80000">--color-marginBox</span><span style="color:#202124">:</span></div>
<div class="a" style="left:1432.90px;top:464.70px;width:6.80px;height:6.80px;background:#e8e8e8;border:1px solid #bdbdbd"></div>
<div class="a nw mk" style="left:1441.80px;top:463.00px;font-family:'Liberation Mono',monospace;font-size:8.28px;line-height:12px;color:#202124;"><span style="color:#202124">transparent;</span></div>
<div class="a" style="left:1513.34px;top:474.10px;width:6.80px;height:6.80px;background:#000;border:1px solid #555"></div>
<div class="a nw mk" style="left:1404.00px;top:472.40px;font-family:'Liberation Mono',monospace;font-size:8.28px;line-height:12px;color:#202124;"><span style="color:#c80000">--pagedjs-crop-color</span><span style="color:#202124">: </span><span style="color:#202124">  black;</span></div>
<div class="a" style="left:1518.31px;top:484.40px;width:6.80px;height:6.80px;background:#fff;border:1px solid #bdbdbd"></div>
<div class="a nw mk" style="left:1404.00px;top:482.70px;font-family:'Liberation Mono',monospace;font-size:8.28px;line-height:12px;color:#202124;"><span style="color:#c80000">--pagedjs-crop-shadow</span><span style="color:#202124">: </span><span style="color:#202124">  white;</span></div>
<div class="a nw mk" style="left:1404.00px;top:493.70px;font-family:'Liberation Mono',monospace;font-size:8.28px;line-height:12px;color:#202124;"><span style="color:#c80000">--pagedjs-crop-stroke</span><span style="color:#202124">: 1px;</span></div>
<div class="a nw mk" style="left:1390.00px;top:503.10px;font-family:'Liberation Mono',monospace;font-size:8.28px;line-height:12px;color:#202124;"><span style="color:#202124">}</span></div>
<div class="a" style="left:1386.80px;top:516.70px;width:182.20px;height:1.00px;background:#e4e4e4;"></div>
<div class="a nw mk" style="left:1390.00px;top:519.10px;font-family:'Liberation Mono',monospace;font-size:8.28px;line-height:12px;color:#202124;"><span style="color:#202124">:root {</span></div>
<div class="a nw mk" style="left:1533.81px;top:519.10px;font-family:'Liberation Mono',monospace;font-size:8.28px;line-height:12px;color:#5f6368;">&lt;style&gt;</div>
<div class="a nw mk" style="left:1404.00px;top:531.20px;font-family:'Liberation Mono',monospace;font-size:8.28px;line-height:12px;color:#202124;"><span style="color:#c80000">--pagedjs-bleed-top</span><span style="color:#202124">: 3mm;</span></div>
<div class="a nw mk" style="left:1404.00px;top:541.50px;font-family:'Liberation Mono',monospace;font-size:8.28px;line-height:12px;color:#202124;"><span style="color:#c80000">--pagedjs-bleed-right</span><span style="color:#202124">: 3mm;</span></div>
<div class="a nw mk" style="left:1404.00px;top:552.00px;font-family:'Liberation Mono',monospace;font-size:8.28px;line-height:12px;color:#202124;"><span style="color:#c80000">--pagedjs-bleed-bottom</span><span style="color:#202124">: 3mm;</span></div>
<div class="a nw mk" style="left:1404.00px;top:562.30px;font-family:'Liberation Mono',monospace;font-size:8.28px;line-height:12px;color:#202124;"><span style="color:#c80000">--pagedjs-bleed-left</span><span style="color:#202124">: 3mm;</span></div>
<div class="a nw mk" style="left:1404.00px;top:572.90px;font-family:'Liberation Mono',monospace;font-size:8.28px;line-height:12px;color:#202124;"><span style="color:#c80000">--pagedjs-bleed-right-top</span><span style="color:#202124">: 3mm;</span></div>
<div class="a nw mk" style="left:1404.00px;top:583.30px;font-family:'Liberation Mono',monospace;font-size:8.28px;line-height:12px;color:#202124;"><span style="color:#c80000">--pagedjs-bleed-right-right</span><span style="color:#202124">:</span></div>
<div class="a nw mk" style="left:1432.40px;top:592.70px;font-family:'Liberation Mono',monospace;font-size:8.28px;line-height:12px;color:#202124;"><span style="color:#202124">3mm;</span></div>
<div class="a nw mk" style="left:1404.00px;top:602.50px;font-family:'Liberation Mono',monospace;font-size:8.28px;line-height:12px;color:#202124;"><span style="color:#c80000">--pagedjs-bleed-right-bottom</span><span style="color:#202124">:</span></div>
<div class="a nw mk" style="left:1432.40px;top:611.90px;font-family:'Liberation Mono',monospace;font-size:8.28px;line-height:12px;color:#202124;"><span style="color:#202124">3mm;</span></div>
<div class="a nw mk" style="left:1404.00px;top:621.60px;font-family:'Liberation Mono',monospace;font-size:8.28px;line-height:12px;color:#202124;"><span style="color:#c80000">--pagedjs-bleed-right-left</span><span style="color:#202124">: 3mm;</span></div>
<div class="a nw mk" style="left:1404.00px;top:632.50px;font-family:'Liberation Mono',monospace;font-size:8.28px;line-height:12px;color:#202124;"><span style="color:#c80000">--pagedjs-bleed-left-top</span><span style="color:#202124">: 3mm;</span></div>
<div class="a nw mk" style="left:1404.00px;top:642.70px;font-family:'Liberation Mono',monospace;font-size:8.28px;line-height:12px;color:#202124;"><span style="color:#c80000">--pagedjs-bleed-left-right</span><span style="color:#202124">: 3mm;</span></div>
<div class="a nw mk" style="left:1404.00px;top:653.40px;font-family:'Liberation Mono',monospace;font-size:8.28px;line-height:12px;color:#202124;"><span style="color:#c80000">--pagedjs-bleed-left-bottom</span><span style="color:#202124">:</span></div>
<div class="a nw mk" style="left:1432.40px;top:663.20px;font-family:'Liberation Mono',monospace;font-size:8.28px;line-height:12px;color:#202124;"><span style="color:#202124">3mm;</span></div>
<div class="a nw mk" style="left:1404.00px;top:672.50px;font-family:'Liberation Mono',monospace;font-size:8.28px;line-height:12px;color:#202124;"><span style="color:#c80000">--pagedjs-bleed-left-left</span><span style="color:#202124">: 3mm;</span></div>
<div class="a nw mk" style="left:1404.00px;top:683.20px;font-family:'Liberation Mono',monospace;font-size:8.28px;line-height:12px;color:#202124;text-decoration:line-through;text-decoration-color:#666;text-decoration-thickness:0.8px"><span style="color:#c80000">--pagedjs-width</span><span style="color:#202124">: 165mm;</span></div>
<div class="a nw mk" style="left:1404.00px;top:693.30px;font-family:'Liberation Mono',monospace;font-size:8.28px;line-height:12px;color:#202124;text-decoration:line-through;text-decoration-color:#666;text-decoration-thickness:0.8px"><span style="color:#c80000">--pagedjs-height</span><span style="color:#202124">: 225mm;</span></div>
<div class="a nw mk" style="left:1404.00px;top:704.00px;font-family:'Liberation Mono',monospace;font-size:8.28px;line-height:12px;color:#202124;"><span style="color:#c80000">--pagedjs-width</span><span style="color:#202124">: calc( 165mm +</span></div>
<div class="a nw mk" style="left:1432.40px;top:713.80px;font-family:'Liberation Mono',monospace;font-size:8.28px;line-height:12px;color:#202124;"><span style="color:#202124">3mm + 3mm );</span></div>
<div class="a nw mk" style="left:1404.00px;top:723.20px;font-family:'Liberation Mono',monospace;font-size:8.28px;line-height:12px;color:#202124;"><span style="color:#c80000">--pagedjs-height</span><span style="color:#202124">: calc( 225mm +</span></div>
<div class="a nw mk" style="left:1432.40px;top:732.50px;font-family:'Liberation Mono',monospace;font-size:8.28px;line-height:12px;color:#202124;"><span style="color:#202124">3mm + 3mm );</span></div>
<div class="a nw mk" style="left:1404.00px;top:742.40px;font-family:'Liberation Mono',monospace;font-size:8.28px;line-height:12px;color:#202124;"><span style="color:#c80000">--pagedjs-width-right</span><span style="color:#202124">: calc(</span></div>
<div class="a nw mk" style="left:1432.40px;top:752.00px;font-family:'Liberation Mono',monospace;font-size:8.28px;line-height:12px;color:#202124;"><span style="color:#202124">165mm + 3mm + 3mm );</span></div>
<div class="a nw mk" style="left:1404.00px;top:761.80px;font-family:'Liberation Mono',monospace;font-size:8.28px;line-height:12px;color:#202124;"><span style="color:#c80000">--pagedjs-height-right</span><span style="color:#202124">: calc(</span></div>
<div class="a nw mk" style="left:1432.40px;top:771.20px;font-family:'Liberation Mono',monospace;font-size:8.28px;line-height:12px;color:#202124;"><span style="color:#202124">225mm + 3mm + 3mm );</span></div>
<div class="a nw mk" style="left:1404.00px;top:781.30px;font-family:'Liberation Mono',monospace;font-size:8.28px;line-height:12px;color:#202124;"><span style="color:#c80000">--pagedjs-width-left</span><span style="color:#202124">: calc(</span></div>
<div class="a nw mk" style="left:1432.40px;top:790.40px;font-family:'Liberation Mono',monospace;font-size:8.28px;line-height:12px;color:#202124;"><span style="color:#202124">165mm + 3mm + 3mm );</span></div>
<div class="a nw mk" style="left:1404.00px;top:800.00px;font-family:'Liberation Mono',monospace;font-size:8.28px;line-height:12px;color:#202124;"><span style="color:#c80000">--pagedjs-height-left</span><span style="color:#202124">: calc(</span></div>
<div class="a nw mk" style="left:1432.40px;top:809.80px;font-family:'Liberation Mono',monospace;font-size:8.28px;line-height:12px;color:#202124;"><span style="color:#202124">225mm + 3mm + 3mm );</span></div>
<div class="a nw mk" style="left:1390.00px;top:818.60px;font-family:'Liberation Mono',monospace;font-size:8.28px;line-height:12px;color:#202124;"><span style="color:#202124">}</span></div>
<div class="a" style="left:1386.80px;top:827.00px;width:182.20px;height:1.00px;background:#d5d7db;"></div>
<div class="a" style="left:905.00px;top:809.50px;width:481.50px;height:17.50px;background:#fff;border-top:1px solid #d5d7db"></div>
<div class="a" style="left:963.90px;top:810.50px;width:45.40px;height:16.40px;background:#f1f3f4;"></div>
<div class="a nw" style="left:909.60px;top:812.08px;font-family:'Liberation Sans',sans-serif;font-size:9px;line-height:14px;color:#881280;">html</div>
<div class="a nw" style="left:937.80px;top:812.08px;font-family:'Liberation Sans',sans-serif;font-size:9px;line-height:14px;color:#881280;">body</div>
<div class="a nw" style="left:968.70px;top:812.08px;font-family:'Liberation Sans',sans-serif;font-size:9px;line-height:14px;color:#881280;">template</div>
<div class="a" style="left:905.50px;top:827.00px;width:663.50px;height:16.40px;background:#f1f3f4;border-top:1px solid #d6d8db"></div>
<div class="a" style="left:905px;top:828px;width:664px;height:15.4px;overflow:hidden"><div class="a" style="left:-905px;top:-828px;width:1600px;height:900px">
<div class="a" style="left:916.50px;top:833.90px;width:1.50px;height:1.50px;background:#5f6368;border-radius:1px"></div>
<div class="a" style="left:916.50px;top:837.60px;width:1.50px;height:1.50px;background:#5f6368;border-radius:1px"></div>
<div class="a nw" style="left:933.00px;top:831.28px;font-family:'Liberation Sans',sans-serif;font-size:9px;line-height:14px;color:#5f6368;">Console</div>
<div class="a nw" style="left:981.00px;top:831.28px;font-family:'Liberation Sans',sans-serif;font-size:9px;line-height:14px;color:#5f6368;">Coverage</div>
<div class="a nw" style="left:1041.60px;top:831.28px;font-family:'Liberation Sans',sans-serif;font-size:9px;line-height:14px;color:#5f6368;">Rendering</div>
<div class="a nw" style="left:1105.00px;top:831.28px;font-family:'Liberation Sans',sans-serif;font-size:9px;line-height:14px;color:#202124;">What's New</div>
<div class="a nw" style="left:1175.50px;top:831.28px;font-family:'Liberation Sans',sans-serif;font-size:9px;line-height:14px;color:#5f6368;">Network request blocking</div>
<div class="a nw" style="left:1301.00px;top:831.28px;font-family:'Liberation Sans',sans-serif;font-size:9px;line-height:14px;color:#5f6368;">WebAudio</div>
<div class="a nw" style="left:1365.30px;top:831.28px;font-family:'Liberation Sans',sans-serif;font-size:9px;line-height:14px;color:#5f6368;">Sensors</div>
</div></div>
<svg class="a" style="left:1158px;top:834.2px" width="8" height="8" viewBox="0 0 8 8"><path d="M1.5 1.5L6.5 6.5M6.5 1.5L1.5 6.5" stroke="#202124" stroke-width="1.1"/></svg>
<svg class="a" style="left:1553px;top:833px" width="10" height="10" viewBox="0 0 10 10"><path d="M1.6 1.6L8.4 8.4M8.4 1.6L1.6 8.4" stroke="#5f6368" stroke-width="1.1"/></svg></body></html>
